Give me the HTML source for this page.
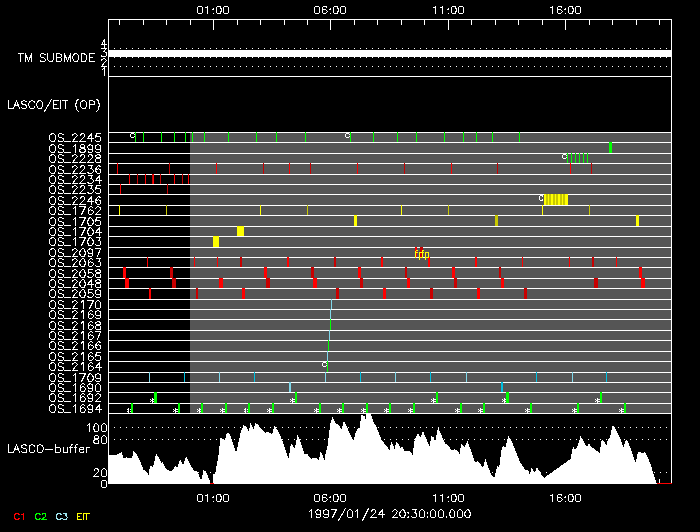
<!DOCTYPE html>
<html><head><meta charset="utf-8"><title>LASCO/EIT</title>
<style>
html,body{margin:0;padding:0;background:#000;width:700px;height:532px;overflow:hidden}
svg{display:block}
text{font-family:"Liberation Sans", sans-serif}
</style></head><body>
<svg width="700" height="532" viewBox="0 0 700 532">
<rect x="0" y="0" width="700" height="532" fill="#000"/>
<g shape-rendering="crispEdges">
<rect x="108" y="19" width="1" height="465" fill="#fff"/>
<rect x="671" y="19" width="1" height="465" fill="#fff"/>
<rect x="108" y="19" width="564" height="1" fill="#fff"/>
<rect x="119" y="19" width="1" height="6" fill="#fff"/>
<rect x="143" y="19" width="1" height="6" fill="#fff"/>
<rect x="166" y="19" width="1" height="6" fill="#fff"/>
<rect x="190" y="19" width="1" height="6" fill="#fff"/>
<rect x="213" y="19" width="1" height="11" fill="#fff"/>
<rect x="237" y="19" width="1" height="6" fill="#fff"/>
<rect x="260" y="19" width="1" height="6" fill="#fff"/>
<rect x="284" y="19" width="1" height="6" fill="#fff"/>
<rect x="307" y="19" width="1" height="6" fill="#fff"/>
<rect x="330" y="19" width="1" height="11" fill="#fff"/>
<rect x="354" y="19" width="1" height="6" fill="#fff"/>
<rect x="377" y="19" width="1" height="6" fill="#fff"/>
<rect x="401" y="19" width="1" height="6" fill="#fff"/>
<rect x="424" y="19" width="1" height="6" fill="#fff"/>
<rect x="448" y="19" width="1" height="11" fill="#fff"/>
<rect x="471" y="19" width="1" height="6" fill="#fff"/>
<rect x="495" y="19" width="1" height="6" fill="#fff"/>
<rect x="518" y="19" width="1" height="6" fill="#fff"/>
<rect x="542" y="19" width="1" height="6" fill="#fff"/>
<rect x="565" y="19" width="1" height="11" fill="#fff"/>
<rect x="589" y="19" width="1" height="6" fill="#fff"/>
<rect x="612" y="19" width="1" height="6" fill="#fff"/>
<rect x="636" y="19" width="1" height="6" fill="#fff"/>
<rect x="659" y="19" width="1" height="6" fill="#fff"/>
<rect x="114" y="48" width="1" height="1" fill="#fff"/>
<rect x="120" y="48" width="1" height="1" fill="#fff"/>
<rect x="126" y="48" width="1" height="1" fill="#fff"/>
<rect x="132" y="48" width="1" height="1" fill="#fff"/>
<rect x="138" y="48" width="1" height="1" fill="#fff"/>
<rect x="144" y="48" width="1" height="1" fill="#fff"/>
<rect x="150" y="48" width="1" height="1" fill="#fff"/>
<rect x="156" y="48" width="1" height="1" fill="#fff"/>
<rect x="162" y="48" width="1" height="1" fill="#fff"/>
<rect x="168" y="48" width="1" height="1" fill="#fff"/>
<rect x="174" y="48" width="1" height="1" fill="#fff"/>
<rect x="180" y="48" width="1" height="1" fill="#fff"/>
<rect x="186" y="48" width="1" height="1" fill="#fff"/>
<rect x="192" y="48" width="1" height="1" fill="#fff"/>
<rect x="198" y="48" width="1" height="1" fill="#fff"/>
<rect x="204" y="48" width="1" height="1" fill="#fff"/>
<rect x="210" y="48" width="1" height="1" fill="#fff"/>
<rect x="216" y="48" width="1" height="1" fill="#fff"/>
<rect x="222" y="48" width="1" height="1" fill="#fff"/>
<rect x="228" y="48" width="1" height="1" fill="#fff"/>
<rect x="234" y="48" width="1" height="1" fill="#fff"/>
<rect x="240" y="48" width="1" height="1" fill="#fff"/>
<rect x="246" y="48" width="1" height="1" fill="#fff"/>
<rect x="252" y="48" width="1" height="1" fill="#fff"/>
<rect x="258" y="48" width="1" height="1" fill="#fff"/>
<rect x="264" y="48" width="1" height="1" fill="#fff"/>
<rect x="270" y="48" width="1" height="1" fill="#fff"/>
<rect x="276" y="48" width="1" height="1" fill="#fff"/>
<rect x="282" y="48" width="1" height="1" fill="#fff"/>
<rect x="288" y="48" width="1" height="1" fill="#fff"/>
<rect x="294" y="48" width="1" height="1" fill="#fff"/>
<rect x="300" y="48" width="1" height="1" fill="#fff"/>
<rect x="306" y="48" width="1" height="1" fill="#fff"/>
<rect x="312" y="48" width="1" height="1" fill="#fff"/>
<rect x="318" y="48" width="1" height="1" fill="#fff"/>
<rect x="324" y="48" width="1" height="1" fill="#fff"/>
<rect x="330" y="48" width="1" height="1" fill="#fff"/>
<rect x="336" y="48" width="1" height="1" fill="#fff"/>
<rect x="342" y="48" width="1" height="1" fill="#fff"/>
<rect x="348" y="48" width="1" height="1" fill="#fff"/>
<rect x="354" y="48" width="1" height="1" fill="#fff"/>
<rect x="360" y="48" width="1" height="1" fill="#fff"/>
<rect x="366" y="48" width="1" height="1" fill="#fff"/>
<rect x="372" y="48" width="1" height="1" fill="#fff"/>
<rect x="378" y="48" width="1" height="1" fill="#fff"/>
<rect x="384" y="48" width="1" height="1" fill="#fff"/>
<rect x="390" y="48" width="1" height="1" fill="#fff"/>
<rect x="396" y="48" width="1" height="1" fill="#fff"/>
<rect x="402" y="48" width="1" height="1" fill="#fff"/>
<rect x="408" y="48" width="1" height="1" fill="#fff"/>
<rect x="414" y="48" width="1" height="1" fill="#fff"/>
<rect x="420" y="48" width="1" height="1" fill="#fff"/>
<rect x="426" y="48" width="1" height="1" fill="#fff"/>
<rect x="432" y="48" width="1" height="1" fill="#fff"/>
<rect x="438" y="48" width="1" height="1" fill="#fff"/>
<rect x="444" y="48" width="1" height="1" fill="#fff"/>
<rect x="450" y="48" width="1" height="1" fill="#fff"/>
<rect x="456" y="48" width="1" height="1" fill="#fff"/>
<rect x="462" y="48" width="1" height="1" fill="#fff"/>
<rect x="468" y="48" width="1" height="1" fill="#fff"/>
<rect x="474" y="48" width="1" height="1" fill="#fff"/>
<rect x="480" y="48" width="1" height="1" fill="#fff"/>
<rect x="486" y="48" width="1" height="1" fill="#fff"/>
<rect x="492" y="48" width="1" height="1" fill="#fff"/>
<rect x="498" y="48" width="1" height="1" fill="#fff"/>
<rect x="504" y="48" width="1" height="1" fill="#fff"/>
<rect x="510" y="48" width="1" height="1" fill="#fff"/>
<rect x="516" y="48" width="1" height="1" fill="#fff"/>
<rect x="522" y="48" width="1" height="1" fill="#fff"/>
<rect x="528" y="48" width="1" height="1" fill="#fff"/>
<rect x="534" y="48" width="1" height="1" fill="#fff"/>
<rect x="540" y="48" width="1" height="1" fill="#fff"/>
<rect x="546" y="48" width="1" height="1" fill="#fff"/>
<rect x="552" y="48" width="1" height="1" fill="#fff"/>
<rect x="558" y="48" width="1" height="1" fill="#fff"/>
<rect x="564" y="48" width="1" height="1" fill="#fff"/>
<rect x="570" y="48" width="1" height="1" fill="#fff"/>
<rect x="576" y="48" width="1" height="1" fill="#fff"/>
<rect x="582" y="48" width="1" height="1" fill="#fff"/>
<rect x="588" y="48" width="1" height="1" fill="#fff"/>
<rect x="594" y="48" width="1" height="1" fill="#fff"/>
<rect x="600" y="48" width="1" height="1" fill="#fff"/>
<rect x="606" y="48" width="1" height="1" fill="#fff"/>
<rect x="612" y="48" width="1" height="1" fill="#fff"/>
<rect x="618" y="48" width="1" height="1" fill="#fff"/>
<rect x="624" y="48" width="1" height="1" fill="#fff"/>
<rect x="630" y="48" width="1" height="1" fill="#fff"/>
<rect x="636" y="48" width="1" height="1" fill="#fff"/>
<rect x="642" y="48" width="1" height="1" fill="#fff"/>
<rect x="648" y="48" width="1" height="1" fill="#fff"/>
<rect x="654" y="48" width="1" height="1" fill="#fff"/>
<rect x="660" y="48" width="1" height="1" fill="#fff"/>
<rect x="666" y="48" width="1" height="1" fill="#fff"/>
<rect x="114" y="57" width="1" height="1" fill="#fff"/>
<rect x="120" y="57" width="1" height="1" fill="#fff"/>
<rect x="126" y="57" width="1" height="1" fill="#fff"/>
<rect x="132" y="57" width="1" height="1" fill="#fff"/>
<rect x="138" y="57" width="1" height="1" fill="#fff"/>
<rect x="144" y="57" width="1" height="1" fill="#fff"/>
<rect x="150" y="57" width="1" height="1" fill="#fff"/>
<rect x="156" y="57" width="1" height="1" fill="#fff"/>
<rect x="162" y="57" width="1" height="1" fill="#fff"/>
<rect x="168" y="57" width="1" height="1" fill="#fff"/>
<rect x="174" y="57" width="1" height="1" fill="#fff"/>
<rect x="180" y="57" width="1" height="1" fill="#fff"/>
<rect x="186" y="57" width="1" height="1" fill="#fff"/>
<rect x="192" y="57" width="1" height="1" fill="#fff"/>
<rect x="198" y="57" width="1" height="1" fill="#fff"/>
<rect x="204" y="57" width="1" height="1" fill="#fff"/>
<rect x="210" y="57" width="1" height="1" fill="#fff"/>
<rect x="216" y="57" width="1" height="1" fill="#fff"/>
<rect x="222" y="57" width="1" height="1" fill="#fff"/>
<rect x="228" y="57" width="1" height="1" fill="#fff"/>
<rect x="234" y="57" width="1" height="1" fill="#fff"/>
<rect x="240" y="57" width="1" height="1" fill="#fff"/>
<rect x="246" y="57" width="1" height="1" fill="#fff"/>
<rect x="252" y="57" width="1" height="1" fill="#fff"/>
<rect x="258" y="57" width="1" height="1" fill="#fff"/>
<rect x="264" y="57" width="1" height="1" fill="#fff"/>
<rect x="270" y="57" width="1" height="1" fill="#fff"/>
<rect x="276" y="57" width="1" height="1" fill="#fff"/>
<rect x="282" y="57" width="1" height="1" fill="#fff"/>
<rect x="288" y="57" width="1" height="1" fill="#fff"/>
<rect x="294" y="57" width="1" height="1" fill="#fff"/>
<rect x="300" y="57" width="1" height="1" fill="#fff"/>
<rect x="306" y="57" width="1" height="1" fill="#fff"/>
<rect x="312" y="57" width="1" height="1" fill="#fff"/>
<rect x="318" y="57" width="1" height="1" fill="#fff"/>
<rect x="324" y="57" width="1" height="1" fill="#fff"/>
<rect x="330" y="57" width="1" height="1" fill="#fff"/>
<rect x="336" y="57" width="1" height="1" fill="#fff"/>
<rect x="342" y="57" width="1" height="1" fill="#fff"/>
<rect x="348" y="57" width="1" height="1" fill="#fff"/>
<rect x="354" y="57" width="1" height="1" fill="#fff"/>
<rect x="360" y="57" width="1" height="1" fill="#fff"/>
<rect x="366" y="57" width="1" height="1" fill="#fff"/>
<rect x="372" y="57" width="1" height="1" fill="#fff"/>
<rect x="378" y="57" width="1" height="1" fill="#fff"/>
<rect x="384" y="57" width="1" height="1" fill="#fff"/>
<rect x="390" y="57" width="1" height="1" fill="#fff"/>
<rect x="396" y="57" width="1" height="1" fill="#fff"/>
<rect x="402" y="57" width="1" height="1" fill="#fff"/>
<rect x="408" y="57" width="1" height="1" fill="#fff"/>
<rect x="414" y="57" width="1" height="1" fill="#fff"/>
<rect x="420" y="57" width="1" height="1" fill="#fff"/>
<rect x="426" y="57" width="1" height="1" fill="#fff"/>
<rect x="432" y="57" width="1" height="1" fill="#fff"/>
<rect x="438" y="57" width="1" height="1" fill="#fff"/>
<rect x="444" y="57" width="1" height="1" fill="#fff"/>
<rect x="450" y="57" width="1" height="1" fill="#fff"/>
<rect x="456" y="57" width="1" height="1" fill="#fff"/>
<rect x="462" y="57" width="1" height="1" fill="#fff"/>
<rect x="468" y="57" width="1" height="1" fill="#fff"/>
<rect x="474" y="57" width="1" height="1" fill="#fff"/>
<rect x="480" y="57" width="1" height="1" fill="#fff"/>
<rect x="486" y="57" width="1" height="1" fill="#fff"/>
<rect x="492" y="57" width="1" height="1" fill="#fff"/>
<rect x="498" y="57" width="1" height="1" fill="#fff"/>
<rect x="504" y="57" width="1" height="1" fill="#fff"/>
<rect x="510" y="57" width="1" height="1" fill="#fff"/>
<rect x="516" y="57" width="1" height="1" fill="#fff"/>
<rect x="522" y="57" width="1" height="1" fill="#fff"/>
<rect x="528" y="57" width="1" height="1" fill="#fff"/>
<rect x="534" y="57" width="1" height="1" fill="#fff"/>
<rect x="540" y="57" width="1" height="1" fill="#fff"/>
<rect x="546" y="57" width="1" height="1" fill="#fff"/>
<rect x="552" y="57" width="1" height="1" fill="#fff"/>
<rect x="558" y="57" width="1" height="1" fill="#fff"/>
<rect x="564" y="57" width="1" height="1" fill="#fff"/>
<rect x="570" y="57" width="1" height="1" fill="#fff"/>
<rect x="576" y="57" width="1" height="1" fill="#fff"/>
<rect x="582" y="57" width="1" height="1" fill="#fff"/>
<rect x="588" y="57" width="1" height="1" fill="#fff"/>
<rect x="594" y="57" width="1" height="1" fill="#fff"/>
<rect x="600" y="57" width="1" height="1" fill="#fff"/>
<rect x="606" y="57" width="1" height="1" fill="#fff"/>
<rect x="612" y="57" width="1" height="1" fill="#fff"/>
<rect x="618" y="57" width="1" height="1" fill="#fff"/>
<rect x="624" y="57" width="1" height="1" fill="#fff"/>
<rect x="630" y="57" width="1" height="1" fill="#fff"/>
<rect x="636" y="57" width="1" height="1" fill="#fff"/>
<rect x="642" y="57" width="1" height="1" fill="#fff"/>
<rect x="648" y="57" width="1" height="1" fill="#fff"/>
<rect x="654" y="57" width="1" height="1" fill="#fff"/>
<rect x="660" y="57" width="1" height="1" fill="#fff"/>
<rect x="666" y="57" width="1" height="1" fill="#fff"/>
<rect x="114" y="66" width="1" height="1" fill="#fff"/>
<rect x="120" y="66" width="1" height="1" fill="#fff"/>
<rect x="126" y="66" width="1" height="1" fill="#fff"/>
<rect x="132" y="66" width="1" height="1" fill="#fff"/>
<rect x="138" y="66" width="1" height="1" fill="#fff"/>
<rect x="144" y="66" width="1" height="1" fill="#fff"/>
<rect x="150" y="66" width="1" height="1" fill="#fff"/>
<rect x="156" y="66" width="1" height="1" fill="#fff"/>
<rect x="162" y="66" width="1" height="1" fill="#fff"/>
<rect x="168" y="66" width="1" height="1" fill="#fff"/>
<rect x="174" y="66" width="1" height="1" fill="#fff"/>
<rect x="180" y="66" width="1" height="1" fill="#fff"/>
<rect x="186" y="66" width="1" height="1" fill="#fff"/>
<rect x="192" y="66" width="1" height="1" fill="#fff"/>
<rect x="198" y="66" width="1" height="1" fill="#fff"/>
<rect x="204" y="66" width="1" height="1" fill="#fff"/>
<rect x="210" y="66" width="1" height="1" fill="#fff"/>
<rect x="216" y="66" width="1" height="1" fill="#fff"/>
<rect x="222" y="66" width="1" height="1" fill="#fff"/>
<rect x="228" y="66" width="1" height="1" fill="#fff"/>
<rect x="234" y="66" width="1" height="1" fill="#fff"/>
<rect x="240" y="66" width="1" height="1" fill="#fff"/>
<rect x="246" y="66" width="1" height="1" fill="#fff"/>
<rect x="252" y="66" width="1" height="1" fill="#fff"/>
<rect x="258" y="66" width="1" height="1" fill="#fff"/>
<rect x="264" y="66" width="1" height="1" fill="#fff"/>
<rect x="270" y="66" width="1" height="1" fill="#fff"/>
<rect x="276" y="66" width="1" height="1" fill="#fff"/>
<rect x="282" y="66" width="1" height="1" fill="#fff"/>
<rect x="288" y="66" width="1" height="1" fill="#fff"/>
<rect x="294" y="66" width="1" height="1" fill="#fff"/>
<rect x="300" y="66" width="1" height="1" fill="#fff"/>
<rect x="306" y="66" width="1" height="1" fill="#fff"/>
<rect x="312" y="66" width="1" height="1" fill="#fff"/>
<rect x="318" y="66" width="1" height="1" fill="#fff"/>
<rect x="324" y="66" width="1" height="1" fill="#fff"/>
<rect x="330" y="66" width="1" height="1" fill="#fff"/>
<rect x="336" y="66" width="1" height="1" fill="#fff"/>
<rect x="342" y="66" width="1" height="1" fill="#fff"/>
<rect x="348" y="66" width="1" height="1" fill="#fff"/>
<rect x="354" y="66" width="1" height="1" fill="#fff"/>
<rect x="360" y="66" width="1" height="1" fill="#fff"/>
<rect x="366" y="66" width="1" height="1" fill="#fff"/>
<rect x="372" y="66" width="1" height="1" fill="#fff"/>
<rect x="378" y="66" width="1" height="1" fill="#fff"/>
<rect x="384" y="66" width="1" height="1" fill="#fff"/>
<rect x="390" y="66" width="1" height="1" fill="#fff"/>
<rect x="396" y="66" width="1" height="1" fill="#fff"/>
<rect x="402" y="66" width="1" height="1" fill="#fff"/>
<rect x="408" y="66" width="1" height="1" fill="#fff"/>
<rect x="414" y="66" width="1" height="1" fill="#fff"/>
<rect x="420" y="66" width="1" height="1" fill="#fff"/>
<rect x="426" y="66" width="1" height="1" fill="#fff"/>
<rect x="432" y="66" width="1" height="1" fill="#fff"/>
<rect x="438" y="66" width="1" height="1" fill="#fff"/>
<rect x="444" y="66" width="1" height="1" fill="#fff"/>
<rect x="450" y="66" width="1" height="1" fill="#fff"/>
<rect x="456" y="66" width="1" height="1" fill="#fff"/>
<rect x="462" y="66" width="1" height="1" fill="#fff"/>
<rect x="468" y="66" width="1" height="1" fill="#fff"/>
<rect x="474" y="66" width="1" height="1" fill="#fff"/>
<rect x="480" y="66" width="1" height="1" fill="#fff"/>
<rect x="486" y="66" width="1" height="1" fill="#fff"/>
<rect x="492" y="66" width="1" height="1" fill="#fff"/>
<rect x="498" y="66" width="1" height="1" fill="#fff"/>
<rect x="504" y="66" width="1" height="1" fill="#fff"/>
<rect x="510" y="66" width="1" height="1" fill="#fff"/>
<rect x="516" y="66" width="1" height="1" fill="#fff"/>
<rect x="522" y="66" width="1" height="1" fill="#fff"/>
<rect x="528" y="66" width="1" height="1" fill="#fff"/>
<rect x="534" y="66" width="1" height="1" fill="#fff"/>
<rect x="540" y="66" width="1" height="1" fill="#fff"/>
<rect x="546" y="66" width="1" height="1" fill="#fff"/>
<rect x="552" y="66" width="1" height="1" fill="#fff"/>
<rect x="558" y="66" width="1" height="1" fill="#fff"/>
<rect x="564" y="66" width="1" height="1" fill="#fff"/>
<rect x="570" y="66" width="1" height="1" fill="#fff"/>
<rect x="576" y="66" width="1" height="1" fill="#fff"/>
<rect x="582" y="66" width="1" height="1" fill="#fff"/>
<rect x="588" y="66" width="1" height="1" fill="#fff"/>
<rect x="594" y="66" width="1" height="1" fill="#fff"/>
<rect x="600" y="66" width="1" height="1" fill="#fff"/>
<rect x="606" y="66" width="1" height="1" fill="#fff"/>
<rect x="612" y="66" width="1" height="1" fill="#fff"/>
<rect x="618" y="66" width="1" height="1" fill="#fff"/>
<rect x="624" y="66" width="1" height="1" fill="#fff"/>
<rect x="630" y="66" width="1" height="1" fill="#fff"/>
<rect x="636" y="66" width="1" height="1" fill="#fff"/>
<rect x="642" y="66" width="1" height="1" fill="#fff"/>
<rect x="648" y="66" width="1" height="1" fill="#fff"/>
<rect x="654" y="66" width="1" height="1" fill="#fff"/>
<rect x="660" y="66" width="1" height="1" fill="#fff"/>
<rect x="666" y="66" width="1" height="1" fill="#fff"/>
<rect x="109" y="50" width="562" height="7" fill="#fff"/>
<rect x="108" y="76" width="564" height="1" fill="#fff"/>
<rect x="190" y="133" width="481" height="280" fill="#555555"/>
<rect x="108" y="132" width="564" height="1" fill="#fff"/>
<rect x="108" y="142" width="564" height="1" fill="#fff"/>
<rect x="108" y="153" width="564" height="1" fill="#fff"/>
<rect x="108" y="163" width="564" height="1" fill="#fff"/>
<rect x="108" y="174" width="564" height="1" fill="#fff"/>
<rect x="108" y="184" width="564" height="1" fill="#fff"/>
<rect x="108" y="194" width="564" height="1" fill="#fff"/>
<rect x="108" y="205" width="564" height="1" fill="#fff"/>
<rect x="108" y="215" width="564" height="1" fill="#fff"/>
<rect x="108" y="226" width="564" height="1" fill="#fff"/>
<rect x="108" y="236" width="564" height="1" fill="#fff"/>
<rect x="108" y="247" width="564" height="1" fill="#fff"/>
<rect x="108" y="257" width="564" height="1" fill="#fff"/>
<rect x="108" y="267" width="564" height="1" fill="#fff"/>
<rect x="108" y="278" width="564" height="1" fill="#fff"/>
<rect x="108" y="288" width="564" height="1" fill="#fff"/>
<rect x="108" y="299" width="564" height="1" fill="#fff"/>
<rect x="108" y="309" width="564" height="1" fill="#fff"/>
<rect x="108" y="319" width="564" height="1" fill="#fff"/>
<rect x="108" y="330" width="564" height="1" fill="#fff"/>
<rect x="108" y="340" width="564" height="1" fill="#fff"/>
<rect x="108" y="351" width="564" height="1" fill="#fff"/>
<rect x="108" y="361" width="564" height="1" fill="#fff"/>
<rect x="108" y="372" width="564" height="1" fill="#fff"/>
<rect x="108" y="382" width="564" height="1" fill="#fff"/>
<rect x="108" y="392" width="564" height="1" fill="#fff"/>
<rect x="108" y="403" width="564" height="1" fill="#fff"/>
<rect x="108" y="413" width="564" height="1" fill="#fff"/>
</g>
<g shape-rendering="crispEdges">
<rect x="131" y="133" width="1" height="1" fill="#fff"/>
<rect x="132" y="133" width="1" height="1" fill="#fff"/>
<rect x="133" y="133" width="1" height="1" fill="#fff"/>
<rect x="130" y="134" width="1" height="1" fill="#fff"/>
<rect x="134" y="134" width="1" height="1" fill="#fff"/>
<rect x="130" y="135" width="1" height="1" fill="#fff"/>
<rect x="130" y="136" width="1" height="1" fill="#fff"/>
<rect x="134" y="136" width="1" height="1" fill="#fff"/>
<rect x="131" y="137" width="1" height="1" fill="#fff"/>
<rect x="132" y="137" width="1" height="1" fill="#fff"/>
<rect x="133" y="137" width="1" height="1" fill="#fff"/>
<rect x="346" y="133" width="1" height="1" fill="#fff"/>
<rect x="347" y="133" width="1" height="1" fill="#fff"/>
<rect x="348" y="133" width="1" height="1" fill="#fff"/>
<rect x="345" y="134" width="1" height="1" fill="#fff"/>
<rect x="349" y="134" width="1" height="1" fill="#fff"/>
<rect x="345" y="135" width="1" height="1" fill="#fff"/>
<rect x="345" y="136" width="1" height="1" fill="#fff"/>
<rect x="349" y="136" width="1" height="1" fill="#fff"/>
<rect x="346" y="137" width="1" height="1" fill="#fff"/>
<rect x="347" y="137" width="1" height="1" fill="#fff"/>
<rect x="348" y="137" width="1" height="1" fill="#fff"/>
<rect x="563" y="154" width="1" height="1" fill="#fff"/>
<rect x="564" y="154" width="1" height="1" fill="#fff"/>
<rect x="565" y="154" width="1" height="1" fill="#fff"/>
<rect x="562" y="155" width="1" height="1" fill="#fff"/>
<rect x="566" y="155" width="1" height="1" fill="#fff"/>
<rect x="562" y="156" width="1" height="1" fill="#fff"/>
<rect x="562" y="157" width="1" height="1" fill="#fff"/>
<rect x="566" y="157" width="1" height="1" fill="#fff"/>
<rect x="563" y="158" width="1" height="1" fill="#fff"/>
<rect x="564" y="158" width="1" height="1" fill="#fff"/>
<rect x="565" y="158" width="1" height="1" fill="#fff"/>
<rect x="540" y="195" width="1" height="1" fill="#fff"/>
<rect x="541" y="195" width="1" height="1" fill="#fff"/>
<rect x="542" y="195" width="1" height="1" fill="#fff"/>
<rect x="539" y="196" width="1" height="1" fill="#fff"/>
<rect x="542" y="196" width="1" height="1" fill="#fff"/>
<rect x="539" y="197" width="1" height="1" fill="#fff"/>
<rect x="539" y="198" width="1" height="1" fill="#fff"/>
<rect x="539" y="199" width="1" height="1" fill="#fff"/>
<rect x="542" y="199" width="1" height="1" fill="#fff"/>
<rect x="540" y="200" width="1" height="1" fill="#fff"/>
<rect x="541" y="200" width="1" height="1" fill="#fff"/>
<rect x="542" y="200" width="1" height="1" fill="#fff"/>
<rect x="323" y="362" width="1" height="1" fill="#fff"/>
<rect x="324" y="362" width="1" height="1" fill="#fff"/>
<rect x="325" y="362" width="1" height="1" fill="#fff"/>
<rect x="322" y="363" width="1" height="1" fill="#fff"/>
<rect x="326" y="363" width="1" height="1" fill="#fff"/>
<rect x="322" y="364" width="1" height="1" fill="#fff"/>
<rect x="322" y="365" width="1" height="1" fill="#fff"/>
<rect x="326" y="365" width="1" height="1" fill="#fff"/>
<rect x="323" y="366" width="1" height="1" fill="#fff"/>
<rect x="324" y="366" width="1" height="1" fill="#fff"/>
<rect x="325" y="366" width="1" height="1" fill="#fff"/>
<rect x="152" y="398" width="1" height="1" fill="#fff"/>
<rect x="150" y="399" width="1" height="1" fill="#fff"/>
<rect x="152" y="399" width="1" height="1" fill="#fff"/>
<rect x="153" y="399" width="1" height="1" fill="#fff"/>
<rect x="154" y="399" width="1" height="1" fill="#fff"/>
<rect x="151" y="400" width="1" height="1" fill="#fff"/>
<rect x="152" y="400" width="1" height="1" fill="#fff"/>
<rect x="150" y="401" width="1" height="1" fill="#fff"/>
<rect x="152" y="401" width="1" height="1" fill="#fff"/>
<rect x="153" y="401" width="1" height="1" fill="#fff"/>
<rect x="154" y="401" width="1" height="1" fill="#fff"/>
<rect x="152" y="402" width="1" height="1" fill="#fff"/>
<rect x="292" y="398" width="1" height="1" fill="#fff"/>
<rect x="290" y="399" width="1" height="1" fill="#fff"/>
<rect x="292" y="399" width="1" height="1" fill="#fff"/>
<rect x="293" y="399" width="1" height="1" fill="#fff"/>
<rect x="294" y="399" width="1" height="1" fill="#fff"/>
<rect x="291" y="400" width="1" height="1" fill="#fff"/>
<rect x="292" y="400" width="1" height="1" fill="#fff"/>
<rect x="290" y="401" width="1" height="1" fill="#fff"/>
<rect x="292" y="401" width="1" height="1" fill="#fff"/>
<rect x="293" y="401" width="1" height="1" fill="#fff"/>
<rect x="294" y="401" width="1" height="1" fill="#fff"/>
<rect x="292" y="402" width="1" height="1" fill="#fff"/>
<rect x="433" y="398" width="1" height="1" fill="#fff"/>
<rect x="431" y="399" width="1" height="1" fill="#fff"/>
<rect x="433" y="399" width="1" height="1" fill="#fff"/>
<rect x="434" y="399" width="1" height="1" fill="#fff"/>
<rect x="435" y="399" width="1" height="1" fill="#fff"/>
<rect x="432" y="400" width="1" height="1" fill="#fff"/>
<rect x="433" y="400" width="1" height="1" fill="#fff"/>
<rect x="431" y="401" width="1" height="1" fill="#fff"/>
<rect x="433" y="401" width="1" height="1" fill="#fff"/>
<rect x="434" y="401" width="1" height="1" fill="#fff"/>
<rect x="435" y="401" width="1" height="1" fill="#fff"/>
<rect x="433" y="402" width="1" height="1" fill="#fff"/>
<rect x="504" y="398" width="1" height="1" fill="#fff"/>
<rect x="502" y="399" width="1" height="1" fill="#fff"/>
<rect x="504" y="399" width="1" height="1" fill="#fff"/>
<rect x="505" y="399" width="1" height="1" fill="#fff"/>
<rect x="506" y="399" width="1" height="1" fill="#fff"/>
<rect x="503" y="400" width="1" height="1" fill="#fff"/>
<rect x="504" y="400" width="1" height="1" fill="#fff"/>
<rect x="502" y="401" width="1" height="1" fill="#fff"/>
<rect x="504" y="401" width="1" height="1" fill="#fff"/>
<rect x="505" y="401" width="1" height="1" fill="#fff"/>
<rect x="506" y="401" width="1" height="1" fill="#fff"/>
<rect x="504" y="402" width="1" height="1" fill="#fff"/>
<rect x="597" y="398" width="1" height="1" fill="#fff"/>
<rect x="595" y="399" width="1" height="1" fill="#fff"/>
<rect x="597" y="399" width="1" height="1" fill="#fff"/>
<rect x="598" y="399" width="1" height="1" fill="#fff"/>
<rect x="599" y="399" width="1" height="1" fill="#fff"/>
<rect x="596" y="400" width="1" height="1" fill="#fff"/>
<rect x="597" y="400" width="1" height="1" fill="#fff"/>
<rect x="595" y="401" width="1" height="1" fill="#fff"/>
<rect x="597" y="401" width="1" height="1" fill="#fff"/>
<rect x="598" y="401" width="1" height="1" fill="#fff"/>
<rect x="599" y="401" width="1" height="1" fill="#fff"/>
<rect x="597" y="402" width="1" height="1" fill="#fff"/>
<rect x="128" y="408" width="1" height="1" fill="#fff"/>
<rect x="127" y="409" width="1" height="1" fill="#fff"/>
<rect x="128" y="409" width="1" height="1" fill="#fff"/>
<rect x="130" y="409" width="1" height="1" fill="#fff"/>
<rect x="128" y="410" width="1" height="1" fill="#fff"/>
<rect x="127" y="411" width="1" height="1" fill="#fff"/>
<rect x="128" y="411" width="1" height="1" fill="#fff"/>
<rect x="130" y="411" width="1" height="1" fill="#fff"/>
<rect x="128" y="412" width="1" height="1" fill="#fff"/>
<rect x="175" y="408" width="1" height="1" fill="#fff"/>
<rect x="173" y="409" width="1" height="1" fill="#fff"/>
<rect x="175" y="409" width="1" height="1" fill="#fff"/>
<rect x="176" y="409" width="1" height="1" fill="#fff"/>
<rect x="177" y="409" width="1" height="1" fill="#fff"/>
<rect x="174" y="410" width="1" height="1" fill="#fff"/>
<rect x="175" y="410" width="1" height="1" fill="#fff"/>
<rect x="173" y="411" width="1" height="1" fill="#fff"/>
<rect x="175" y="411" width="1" height="1" fill="#fff"/>
<rect x="176" y="411" width="1" height="1" fill="#fff"/>
<rect x="177" y="411" width="1" height="1" fill="#fff"/>
<rect x="175" y="412" width="1" height="1" fill="#fff"/>
<rect x="199" y="408" width="1" height="1" fill="#fff"/>
<rect x="197" y="409" width="1" height="1" fill="#fff"/>
<rect x="199" y="409" width="1" height="1" fill="#fff"/>
<rect x="200" y="409" width="1" height="1" fill="#fff"/>
<rect x="201" y="409" width="1" height="1" fill="#fff"/>
<rect x="198" y="410" width="1" height="1" fill="#fff"/>
<rect x="199" y="410" width="1" height="1" fill="#fff"/>
<rect x="197" y="411" width="1" height="1" fill="#fff"/>
<rect x="199" y="411" width="1" height="1" fill="#fff"/>
<rect x="200" y="411" width="1" height="1" fill="#fff"/>
<rect x="201" y="411" width="1" height="1" fill="#fff"/>
<rect x="199" y="412" width="1" height="1" fill="#fff"/>
<rect x="222" y="408" width="1" height="1" fill="#fff"/>
<rect x="220" y="409" width="1" height="1" fill="#fff"/>
<rect x="222" y="409" width="1" height="1" fill="#fff"/>
<rect x="223" y="409" width="1" height="1" fill="#fff"/>
<rect x="224" y="409" width="1" height="1" fill="#fff"/>
<rect x="221" y="410" width="1" height="1" fill="#fff"/>
<rect x="222" y="410" width="1" height="1" fill="#fff"/>
<rect x="220" y="411" width="1" height="1" fill="#fff"/>
<rect x="222" y="411" width="1" height="1" fill="#fff"/>
<rect x="223" y="411" width="1" height="1" fill="#fff"/>
<rect x="224" y="411" width="1" height="1" fill="#fff"/>
<rect x="222" y="412" width="1" height="1" fill="#fff"/>
<rect x="245" y="408" width="1" height="1" fill="#fff"/>
<rect x="244" y="409" width="1" height="1" fill="#fff"/>
<rect x="245" y="409" width="1" height="1" fill="#fff"/>
<rect x="247" y="409" width="1" height="1" fill="#fff"/>
<rect x="245" y="410" width="1" height="1" fill="#fff"/>
<rect x="244" y="411" width="1" height="1" fill="#fff"/>
<rect x="245" y="411" width="1" height="1" fill="#fff"/>
<rect x="247" y="411" width="1" height="1" fill="#fff"/>
<rect x="245" y="412" width="1" height="1" fill="#fff"/>
<rect x="269" y="408" width="1" height="1" fill="#fff"/>
<rect x="267" y="409" width="1" height="1" fill="#fff"/>
<rect x="269" y="409" width="1" height="1" fill="#fff"/>
<rect x="270" y="409" width="1" height="1" fill="#fff"/>
<rect x="271" y="409" width="1" height="1" fill="#fff"/>
<rect x="268" y="410" width="1" height="1" fill="#fff"/>
<rect x="269" y="410" width="1" height="1" fill="#fff"/>
<rect x="267" y="411" width="1" height="1" fill="#fff"/>
<rect x="269" y="411" width="1" height="1" fill="#fff"/>
<rect x="270" y="411" width="1" height="1" fill="#fff"/>
<rect x="271" y="411" width="1" height="1" fill="#fff"/>
<rect x="269" y="412" width="1" height="1" fill="#fff"/>
<rect x="316" y="408" width="1" height="1" fill="#fff"/>
<rect x="314" y="409" width="1" height="1" fill="#fff"/>
<rect x="316" y="409" width="1" height="1" fill="#fff"/>
<rect x="317" y="409" width="1" height="1" fill="#fff"/>
<rect x="318" y="409" width="1" height="1" fill="#fff"/>
<rect x="315" y="410" width="1" height="1" fill="#fff"/>
<rect x="316" y="410" width="1" height="1" fill="#fff"/>
<rect x="314" y="411" width="1" height="1" fill="#fff"/>
<rect x="316" y="411" width="1" height="1" fill="#fff"/>
<rect x="317" y="411" width="1" height="1" fill="#fff"/>
<rect x="318" y="411" width="1" height="1" fill="#fff"/>
<rect x="316" y="412" width="1" height="1" fill="#fff"/>
<rect x="339" y="408" width="1" height="1" fill="#fff"/>
<rect x="337" y="409" width="1" height="1" fill="#fff"/>
<rect x="339" y="409" width="1" height="1" fill="#fff"/>
<rect x="340" y="409" width="1" height="1" fill="#fff"/>
<rect x="341" y="409" width="1" height="1" fill="#fff"/>
<rect x="338" y="410" width="1" height="1" fill="#fff"/>
<rect x="339" y="410" width="1" height="1" fill="#fff"/>
<rect x="337" y="411" width="1" height="1" fill="#fff"/>
<rect x="339" y="411" width="1" height="1" fill="#fff"/>
<rect x="340" y="411" width="1" height="1" fill="#fff"/>
<rect x="341" y="411" width="1" height="1" fill="#fff"/>
<rect x="339" y="412" width="1" height="1" fill="#fff"/>
<rect x="363" y="408" width="1" height="1" fill="#fff"/>
<rect x="361" y="409" width="1" height="1" fill="#fff"/>
<rect x="363" y="409" width="1" height="1" fill="#fff"/>
<rect x="364" y="409" width="1" height="1" fill="#fff"/>
<rect x="365" y="409" width="1" height="1" fill="#fff"/>
<rect x="362" y="410" width="1" height="1" fill="#fff"/>
<rect x="363" y="410" width="1" height="1" fill="#fff"/>
<rect x="361" y="411" width="1" height="1" fill="#fff"/>
<rect x="363" y="411" width="1" height="1" fill="#fff"/>
<rect x="364" y="411" width="1" height="1" fill="#fff"/>
<rect x="365" y="411" width="1" height="1" fill="#fff"/>
<rect x="363" y="412" width="1" height="1" fill="#fff"/>
<rect x="386" y="408" width="1" height="1" fill="#fff"/>
<rect x="384" y="409" width="1" height="1" fill="#fff"/>
<rect x="386" y="409" width="1" height="1" fill="#fff"/>
<rect x="387" y="409" width="1" height="1" fill="#fff"/>
<rect x="388" y="409" width="1" height="1" fill="#fff"/>
<rect x="385" y="410" width="1" height="1" fill="#fff"/>
<rect x="386" y="410" width="1" height="1" fill="#fff"/>
<rect x="384" y="411" width="1" height="1" fill="#fff"/>
<rect x="386" y="411" width="1" height="1" fill="#fff"/>
<rect x="387" y="411" width="1" height="1" fill="#fff"/>
<rect x="388" y="411" width="1" height="1" fill="#fff"/>
<rect x="386" y="412" width="1" height="1" fill="#fff"/>
<rect x="410" y="408" width="1" height="1" fill="#fff"/>
<rect x="408" y="409" width="1" height="1" fill="#fff"/>
<rect x="410" y="409" width="1" height="1" fill="#fff"/>
<rect x="411" y="409" width="1" height="1" fill="#fff"/>
<rect x="412" y="409" width="1" height="1" fill="#fff"/>
<rect x="409" y="410" width="1" height="1" fill="#fff"/>
<rect x="410" y="410" width="1" height="1" fill="#fff"/>
<rect x="408" y="411" width="1" height="1" fill="#fff"/>
<rect x="410" y="411" width="1" height="1" fill="#fff"/>
<rect x="411" y="411" width="1" height="1" fill="#fff"/>
<rect x="412" y="411" width="1" height="1" fill="#fff"/>
<rect x="410" y="412" width="1" height="1" fill="#fff"/>
<rect x="457" y="408" width="1" height="1" fill="#fff"/>
<rect x="455" y="409" width="1" height="1" fill="#fff"/>
<rect x="457" y="409" width="1" height="1" fill="#fff"/>
<rect x="458" y="409" width="1" height="1" fill="#fff"/>
<rect x="459" y="409" width="1" height="1" fill="#fff"/>
<rect x="456" y="410" width="1" height="1" fill="#fff"/>
<rect x="457" y="410" width="1" height="1" fill="#fff"/>
<rect x="455" y="411" width="1" height="1" fill="#fff"/>
<rect x="457" y="411" width="1" height="1" fill="#fff"/>
<rect x="458" y="411" width="1" height="1" fill="#fff"/>
<rect x="459" y="411" width="1" height="1" fill="#fff"/>
<rect x="457" y="412" width="1" height="1" fill="#fff"/>
<rect x="480" y="408" width="1" height="1" fill="#fff"/>
<rect x="478" y="409" width="1" height="1" fill="#fff"/>
<rect x="480" y="409" width="1" height="1" fill="#fff"/>
<rect x="481" y="409" width="1" height="1" fill="#fff"/>
<rect x="482" y="409" width="1" height="1" fill="#fff"/>
<rect x="479" y="410" width="1" height="1" fill="#fff"/>
<rect x="480" y="410" width="1" height="1" fill="#fff"/>
<rect x="478" y="411" width="1" height="1" fill="#fff"/>
<rect x="480" y="411" width="1" height="1" fill="#fff"/>
<rect x="481" y="411" width="1" height="1" fill="#fff"/>
<rect x="482" y="411" width="1" height="1" fill="#fff"/>
<rect x="480" y="412" width="1" height="1" fill="#fff"/>
<rect x="527" y="408" width="1" height="1" fill="#fff"/>
<rect x="525" y="409" width="1" height="1" fill="#fff"/>
<rect x="527" y="409" width="1" height="1" fill="#fff"/>
<rect x="528" y="409" width="1" height="1" fill="#fff"/>
<rect x="529" y="409" width="1" height="1" fill="#fff"/>
<rect x="526" y="410" width="1" height="1" fill="#fff"/>
<rect x="527" y="410" width="1" height="1" fill="#fff"/>
<rect x="525" y="411" width="1" height="1" fill="#fff"/>
<rect x="527" y="411" width="1" height="1" fill="#fff"/>
<rect x="528" y="411" width="1" height="1" fill="#fff"/>
<rect x="529" y="411" width="1" height="1" fill="#fff"/>
<rect x="527" y="412" width="1" height="1" fill="#fff"/>
<rect x="574" y="408" width="1" height="1" fill="#fff"/>
<rect x="572" y="409" width="1" height="1" fill="#fff"/>
<rect x="574" y="409" width="1" height="1" fill="#fff"/>
<rect x="575" y="409" width="1" height="1" fill="#fff"/>
<rect x="576" y="409" width="1" height="1" fill="#fff"/>
<rect x="573" y="410" width="1" height="1" fill="#fff"/>
<rect x="574" y="410" width="1" height="1" fill="#fff"/>
<rect x="572" y="411" width="1" height="1" fill="#fff"/>
<rect x="574" y="411" width="1" height="1" fill="#fff"/>
<rect x="575" y="411" width="1" height="1" fill="#fff"/>
<rect x="576" y="411" width="1" height="1" fill="#fff"/>
<rect x="574" y="412" width="1" height="1" fill="#fff"/>
<rect x="621" y="408" width="1" height="1" fill="#fff"/>
<rect x="619" y="409" width="1" height="1" fill="#fff"/>
<rect x="621" y="409" width="1" height="1" fill="#fff"/>
<rect x="622" y="409" width="1" height="1" fill="#fff"/>
<rect x="623" y="409" width="1" height="1" fill="#fff"/>
<rect x="620" y="410" width="1" height="1" fill="#fff"/>
<rect x="621" y="410" width="1" height="1" fill="#fff"/>
<rect x="619" y="411" width="1" height="1" fill="#fff"/>
<rect x="621" y="411" width="1" height="1" fill="#fff"/>
<rect x="622" y="411" width="1" height="1" fill="#fff"/>
<rect x="623" y="411" width="1" height="1" fill="#fff"/>
<rect x="621" y="412" width="1" height="1" fill="#fff"/>
</g>
<g shape-rendering="crispEdges">
<rect x="135" y="132" width="1" height="10" fill="#00ff00"/>
<rect x="143" y="132" width="1" height="10" fill="#00ff00"/>
<rect x="161" y="132" width="1" height="10" fill="#00ff00"/>
<rect x="174" y="132" width="1" height="10" fill="#00ff00"/>
<rect x="185" y="132" width="1" height="10" fill="#00ff00"/>
<rect x="192" y="132" width="1" height="10" fill="#00ff00"/>
<rect x="204" y="132" width="1" height="10" fill="#00ff00"/>
<rect x="228" y="132" width="1" height="10" fill="#00ff00"/>
<rect x="256" y="132" width="1" height="10" fill="#00ff00"/>
<rect x="276" y="132" width="1" height="10" fill="#00ff00"/>
<rect x="305" y="132" width="1" height="10" fill="#00ff00"/>
<rect x="350" y="132" width="1" height="10" fill="#00ff00"/>
<rect x="373" y="132" width="1" height="10" fill="#00ff00"/>
<rect x="397" y="132" width="1" height="10" fill="#00ff00"/>
<rect x="416" y="132" width="1" height="10" fill="#00ff00"/>
<rect x="444" y="132" width="1" height="10" fill="#00ff00"/>
<rect x="463" y="132" width="1" height="10" fill="#00ff00"/>
<rect x="476" y="132" width="1" height="10" fill="#00ff00"/>
<rect x="492" y="132" width="1" height="10" fill="#00ff00"/>
<rect x="519" y="132" width="1" height="10" fill="#00ff00"/>
<rect x="609" y="142" width="3" height="11" fill="#00ff00"/>
<rect x="567" y="153" width="1" height="10" fill="#00ff00"/>
<rect x="571" y="153" width="1" height="10" fill="#00ff00"/>
<rect x="575" y="153" width="1" height="10" fill="#00ff00"/>
<rect x="579" y="153" width="1" height="10" fill="#00ff00"/>
<rect x="583" y="153" width="1" height="10" fill="#00ff00"/>
<rect x="587" y="153" width="1" height="10" fill="#00ff00"/>
<rect x="117" y="163" width="1" height="11" fill="#ff0000"/>
<rect x="169" y="163" width="1" height="11" fill="#c80000"/>
<rect x="216" y="163" width="1" height="11" fill="#ff0000"/>
<rect x="263" y="163" width="1" height="11" fill="#c80000"/>
<rect x="289" y="163" width="1" height="11" fill="#ff0000"/>
<rect x="310" y="163" width="1" height="11" fill="#c80000"/>
<rect x="357" y="163" width="1" height="11" fill="#ff0000"/>
<rect x="404" y="163" width="1" height="11" fill="#c80000"/>
<rect x="451" y="163" width="1" height="11" fill="#ff0000"/>
<rect x="497" y="163" width="1" height="11" fill="#c80000"/>
<rect x="570" y="163" width="1" height="11" fill="#ff0000"/>
<rect x="591" y="163" width="1" height="11" fill="#c80000"/>
<rect x="129" y="174" width="1" height="10" fill="#ff0000"/>
<rect x="137" y="174" width="1" height="10" fill="#c80000"/>
<rect x="145" y="174" width="1" height="10" fill="#ff0000"/>
<rect x="152" y="174" width="1" height="10" fill="#c80000"/>
<rect x="153" y="174" width="1" height="10" fill="#ff0000"/>
<rect x="160" y="174" width="1" height="10" fill="#c80000"/>
<rect x="174" y="174" width="1" height="10" fill="#ff0000"/>
<rect x="182" y="174" width="1" height="10" fill="#c80000"/>
<rect x="188" y="174" width="1" height="10" fill="#ff0000"/>
<rect x="120" y="184" width="1" height="10" fill="#ff0000"/>
<rect x="167" y="184" width="1" height="10" fill="#c80000"/>
<rect x="544" y="194" width="24" height="11" fill="#ffff00"/>
<rect x="546" y="194" width="1" height="11" fill="#c8c800"/>
<rect x="547" y="194" width="1" height="11" fill="#c8c800"/>
<rect x="549" y="194" width="1" height="11" fill="#c8c800"/>
<rect x="550" y="194" width="1" height="11" fill="#c8c800"/>
<rect x="553" y="194" width="1" height="11" fill="#c8c800"/>
<rect x="554" y="194" width="1" height="11" fill="#c8c800"/>
<rect x="556" y="194" width="1" height="11" fill="#c8c800"/>
<rect x="557" y="194" width="1" height="11" fill="#c8c800"/>
<rect x="560" y="194" width="1" height="11" fill="#c8c800"/>
<rect x="561" y="194" width="1" height="11" fill="#c8c800"/>
<rect x="563" y="194" width="1" height="11" fill="#c8c800"/>
<rect x="564" y="194" width="1" height="11" fill="#c8c800"/>
<rect x="119" y="205" width="1" height="10" fill="#ffff00"/>
<rect x="166" y="205" width="1" height="10" fill="#c8c800"/>
<rect x="260" y="205" width="1" height="10" fill="#ffff00"/>
<rect x="307" y="205" width="1" height="10" fill="#c8c800"/>
<rect x="401" y="205" width="1" height="10" fill="#ffff00"/>
<rect x="448" y="205" width="1" height="10" fill="#c8c800"/>
<rect x="542" y="205" width="1" height="10" fill="#ffff00"/>
<rect x="589" y="205" width="1" height="10" fill="#c8c800"/>
<rect x="354" y="215" width="3" height="11" fill="#ffff00"/>
<rect x="495" y="215" width="3" height="11" fill="#c8c800"/>
<rect x="636" y="215" width="3" height="11" fill="#ffff00"/>
<rect x="237" y="226" width="7" height="10" fill="#ffff00"/>
<rect x="213" y="236" width="6" height="11" fill="#ffff00"/>
<rect x="415" y="247" width="2" height="10" fill="#ff0000"/>
<rect x="420" y="247" width="3" height="10" fill="#c80000"/>
<rect x="147" y="257" width="1" height="10" fill="#ff0000"/>
<rect x="194" y="257" width="1" height="10" fill="#ff0000"/>
<rect x="217" y="257" width="1" height="10" fill="#ff0000"/>
<rect x="240" y="257" width="2" height="10" fill="#c80000"/>
<rect x="287" y="257" width="2" height="10" fill="#ff0000"/>
<rect x="334" y="257" width="2" height="10" fill="#c80000"/>
<rect x="381" y="257" width="2" height="10" fill="#ff0000"/>
<rect x="428" y="257" width="2" height="10" fill="#ff0000"/>
<rect x="475" y="257" width="2" height="10" fill="#ff0000"/>
<rect x="522" y="257" width="1" height="10" fill="#ff0000"/>
<rect x="569" y="257" width="1" height="10" fill="#ff0000"/>
<rect x="592" y="257" width="2" height="10" fill="#c80000"/>
<rect x="616" y="257" width="1" height="10" fill="#ff0000"/>
<rect x="123" y="267" width="3" height="11" fill="#ff0000"/>
<rect x="170" y="267" width="3" height="11" fill="#c80000"/>
<rect x="264" y="267" width="3" height="11" fill="#ff0000"/>
<rect x="311" y="267" width="3" height="11" fill="#c80000"/>
<rect x="358" y="267" width="3" height="11" fill="#ff0000"/>
<rect x="405" y="267" width="2" height="11" fill="#c80000"/>
<rect x="452" y="267" width="3" height="11" fill="#ff0000"/>
<rect x="499" y="267" width="2" height="11" fill="#c80000"/>
<rect x="639" y="267" width="3" height="11" fill="#ff0000"/>
<rect x="125" y="278" width="4" height="10" fill="#ff0000"/>
<rect x="172" y="278" width="4" height="10" fill="#c80000"/>
<rect x="219" y="278" width="4" height="10" fill="#ff0000"/>
<rect x="266" y="278" width="4" height="10" fill="#c80000"/>
<rect x="313" y="278" width="4" height="10" fill="#ff0000"/>
<rect x="360" y="278" width="3" height="10" fill="#c80000"/>
<rect x="407" y="278" width="3" height="10" fill="#ff0000"/>
<rect x="454" y="278" width="3" height="10" fill="#c80000"/>
<rect x="501" y="278" width="3" height="10" fill="#ff0000"/>
<rect x="594" y="278" width="4" height="10" fill="#c80000"/>
<rect x="641" y="278" width="4" height="10" fill="#ff0000"/>
<rect x="149" y="288" width="2" height="11" fill="#ff0000"/>
<rect x="196" y="288" width="2" height="11" fill="#c80000"/>
<rect x="242" y="288" width="3" height="11" fill="#ff0000"/>
<rect x="336" y="288" width="3" height="11" fill="#c80000"/>
<rect x="383" y="288" width="3" height="11" fill="#ff0000"/>
<rect x="430" y="288" width="3" height="11" fill="#c80000"/>
<rect x="477" y="288" width="3" height="11" fill="#ff0000"/>
<rect x="524" y="288" width="3" height="11" fill="#c80000"/>
<rect x="331" y="299" width="1" height="10" fill="#80d8ea"/>
<rect x="330" y="309" width="1" height="10" fill="#80d8ea"/>
<rect x="330" y="319" width="1" height="11" fill="#00ff00"/>
<rect x="329" y="330" width="1" height="10" fill="#80d8ea"/>
<rect x="328" y="340" width="1" height="11" fill="#00ff00"/>
<rect x="327" y="351" width="1" height="10" fill="#80d8ea"/>
<rect x="327" y="361" width="1" height="11" fill="#00ff00"/>
<rect x="149" y="372" width="1" height="10" fill="#80d8ea"/>
<rect x="184" y="372" width="1" height="10" fill="#00c0e0"/>
<rect x="219" y="372" width="1" height="10" fill="#80d8ea"/>
<rect x="254" y="372" width="1" height="10" fill="#00c0e0"/>
<rect x="325" y="372" width="1" height="10" fill="#80d8ea"/>
<rect x="360" y="372" width="1" height="10" fill="#00c0e0"/>
<rect x="395" y="372" width="1" height="10" fill="#80d8ea"/>
<rect x="430" y="372" width="1" height="10" fill="#00c0e0"/>
<rect x="466" y="372" width="1" height="10" fill="#80d8ea"/>
<rect x="536" y="372" width="1" height="10" fill="#00c0e0"/>
<rect x="572" y="372" width="1" height="10" fill="#80d8ea"/>
<rect x="606" y="372" width="1" height="10" fill="#00c0e0"/>
<rect x="289" y="382" width="2" height="10" fill="#80d8ea"/>
<rect x="501" y="382" width="2" height="10" fill="#00c0e0"/>
<rect x="154" y="392" width="3" height="11" fill="#00ff00"/>
<rect x="295" y="392" width="2" height="11" fill="#00ff00"/>
<rect x="436" y="392" width="2" height="11" fill="#00ff00"/>
<rect x="506" y="392" width="3" height="11" fill="#00ff00"/>
<rect x="600" y="392" width="2" height="11" fill="#00ff00"/>
<rect x="131" y="403" width="2" height="10" fill="#00ff00"/>
<rect x="178" y="403" width="2" height="10" fill="#00ff00"/>
<rect x="201" y="403" width="2" height="10" fill="#00ff00"/>
<rect x="225" y="403" width="2" height="10" fill="#00ff00"/>
<rect x="248" y="403" width="2" height="10" fill="#00ff00"/>
<rect x="272" y="403" width="2" height="10" fill="#00ff00"/>
<rect x="319" y="403" width="2" height="10" fill="#00ff00"/>
<rect x="342" y="403" width="2" height="10" fill="#00ff00"/>
<rect x="366" y="403" width="2" height="10" fill="#00ff00"/>
<rect x="389" y="403" width="2" height="10" fill="#00ff00"/>
<rect x="413" y="403" width="2" height="10" fill="#00ff00"/>
<rect x="460" y="403" width="2" height="10" fill="#00ff00"/>
<rect x="483" y="403" width="2" height="10" fill="#00ff00"/>
<rect x="530" y="403" width="2" height="10" fill="#00ff00"/>
<rect x="577" y="403" width="2" height="10" fill="#00ff00"/>
<rect x="624" y="403" width="2" height="10" fill="#00ff00"/>
<rect x="114" y="427" width="1" height="1" fill="#fff"/>
<rect x="120" y="427" width="1" height="1" fill="#fff"/>
<rect x="126" y="427" width="1" height="1" fill="#fff"/>
<rect x="132" y="427" width="1" height="1" fill="#fff"/>
<rect x="138" y="427" width="1" height="1" fill="#fff"/>
<rect x="144" y="427" width="1" height="1" fill="#fff"/>
<rect x="150" y="427" width="1" height="1" fill="#fff"/>
<rect x="156" y="427" width="1" height="1" fill="#fff"/>
<rect x="162" y="427" width="1" height="1" fill="#fff"/>
<rect x="168" y="427" width="1" height="1" fill="#fff"/>
<rect x="174" y="427" width="1" height="1" fill="#fff"/>
<rect x="180" y="427" width="1" height="1" fill="#fff"/>
<rect x="186" y="427" width="1" height="1" fill="#fff"/>
<rect x="192" y="427" width="1" height="1" fill="#fff"/>
<rect x="198" y="427" width="1" height="1" fill="#fff"/>
<rect x="204" y="427" width="1" height="1" fill="#fff"/>
<rect x="210" y="427" width="1" height="1" fill="#fff"/>
<rect x="216" y="427" width="1" height="1" fill="#fff"/>
<rect x="222" y="427" width="1" height="1" fill="#fff"/>
<rect x="228" y="427" width="1" height="1" fill="#fff"/>
<rect x="234" y="427" width="1" height="1" fill="#fff"/>
<rect x="240" y="427" width="1" height="1" fill="#fff"/>
<rect x="246" y="427" width="1" height="1" fill="#fff"/>
<rect x="252" y="427" width="1" height="1" fill="#fff"/>
<rect x="258" y="427" width="1" height="1" fill="#fff"/>
<rect x="264" y="427" width="1" height="1" fill="#fff"/>
<rect x="270" y="427" width="1" height="1" fill="#fff"/>
<rect x="276" y="427" width="1" height="1" fill="#fff"/>
<rect x="282" y="427" width="1" height="1" fill="#fff"/>
<rect x="288" y="427" width="1" height="1" fill="#fff"/>
<rect x="294" y="427" width="1" height="1" fill="#fff"/>
<rect x="300" y="427" width="1" height="1" fill="#fff"/>
<rect x="306" y="427" width="1" height="1" fill="#fff"/>
<rect x="312" y="427" width="1" height="1" fill="#fff"/>
<rect x="318" y="427" width="1" height="1" fill="#fff"/>
<rect x="324" y="427" width="1" height="1" fill="#fff"/>
<rect x="330" y="427" width="1" height="1" fill="#fff"/>
<rect x="336" y="427" width="1" height="1" fill="#fff"/>
<rect x="342" y="427" width="1" height="1" fill="#fff"/>
<rect x="348" y="427" width="1" height="1" fill="#fff"/>
<rect x="354" y="427" width="1" height="1" fill="#fff"/>
<rect x="360" y="427" width="1" height="1" fill="#fff"/>
<rect x="366" y="427" width="1" height="1" fill="#fff"/>
<rect x="372" y="427" width="1" height="1" fill="#fff"/>
<rect x="378" y="427" width="1" height="1" fill="#fff"/>
<rect x="384" y="427" width="1" height="1" fill="#fff"/>
<rect x="390" y="427" width="1" height="1" fill="#fff"/>
<rect x="396" y="427" width="1" height="1" fill="#fff"/>
<rect x="402" y="427" width="1" height="1" fill="#fff"/>
<rect x="408" y="427" width="1" height="1" fill="#fff"/>
<rect x="414" y="427" width="1" height="1" fill="#fff"/>
<rect x="420" y="427" width="1" height="1" fill="#fff"/>
<rect x="426" y="427" width="1" height="1" fill="#fff"/>
<rect x="432" y="427" width="1" height="1" fill="#fff"/>
<rect x="438" y="427" width="1" height="1" fill="#fff"/>
<rect x="444" y="427" width="1" height="1" fill="#fff"/>
<rect x="450" y="427" width="1" height="1" fill="#fff"/>
<rect x="456" y="427" width="1" height="1" fill="#fff"/>
<rect x="462" y="427" width="1" height="1" fill="#fff"/>
<rect x="468" y="427" width="1" height="1" fill="#fff"/>
<rect x="474" y="427" width="1" height="1" fill="#fff"/>
<rect x="480" y="427" width="1" height="1" fill="#fff"/>
<rect x="486" y="427" width="1" height="1" fill="#fff"/>
<rect x="492" y="427" width="1" height="1" fill="#fff"/>
<rect x="498" y="427" width="1" height="1" fill="#fff"/>
<rect x="504" y="427" width="1" height="1" fill="#fff"/>
<rect x="510" y="427" width="1" height="1" fill="#fff"/>
<rect x="516" y="427" width="1" height="1" fill="#fff"/>
<rect x="522" y="427" width="1" height="1" fill="#fff"/>
<rect x="528" y="427" width="1" height="1" fill="#fff"/>
<rect x="534" y="427" width="1" height="1" fill="#fff"/>
<rect x="540" y="427" width="1" height="1" fill="#fff"/>
<rect x="546" y="427" width="1" height="1" fill="#fff"/>
<rect x="552" y="427" width="1" height="1" fill="#fff"/>
<rect x="558" y="427" width="1" height="1" fill="#fff"/>
<rect x="564" y="427" width="1" height="1" fill="#fff"/>
<rect x="570" y="427" width="1" height="1" fill="#fff"/>
<rect x="576" y="427" width="1" height="1" fill="#fff"/>
<rect x="582" y="427" width="1" height="1" fill="#fff"/>
<rect x="588" y="427" width="1" height="1" fill="#fff"/>
<rect x="594" y="427" width="1" height="1" fill="#fff"/>
<rect x="600" y="427" width="1" height="1" fill="#fff"/>
<rect x="606" y="427" width="1" height="1" fill="#fff"/>
<rect x="612" y="427" width="1" height="1" fill="#fff"/>
<rect x="618" y="427" width="1" height="1" fill="#fff"/>
<rect x="624" y="427" width="1" height="1" fill="#fff"/>
<rect x="630" y="427" width="1" height="1" fill="#fff"/>
<rect x="636" y="427" width="1" height="1" fill="#fff"/>
<rect x="642" y="427" width="1" height="1" fill="#fff"/>
<rect x="648" y="427" width="1" height="1" fill="#fff"/>
<rect x="654" y="427" width="1" height="1" fill="#fff"/>
<rect x="660" y="427" width="1" height="1" fill="#fff"/>
<rect x="666" y="427" width="1" height="1" fill="#fff"/>
<rect x="114" y="439" width="1" height="1" fill="#fff"/>
<rect x="120" y="439" width="1" height="1" fill="#fff"/>
<rect x="126" y="439" width="1" height="1" fill="#fff"/>
<rect x="132" y="439" width="1" height="1" fill="#fff"/>
<rect x="138" y="439" width="1" height="1" fill="#fff"/>
<rect x="144" y="439" width="1" height="1" fill="#fff"/>
<rect x="150" y="439" width="1" height="1" fill="#fff"/>
<rect x="156" y="439" width="1" height="1" fill="#fff"/>
<rect x="162" y="439" width="1" height="1" fill="#fff"/>
<rect x="168" y="439" width="1" height="1" fill="#fff"/>
<rect x="174" y="439" width="1" height="1" fill="#fff"/>
<rect x="180" y="439" width="1" height="1" fill="#fff"/>
<rect x="186" y="439" width="1" height="1" fill="#fff"/>
<rect x="192" y="439" width="1" height="1" fill="#fff"/>
<rect x="198" y="439" width="1" height="1" fill="#fff"/>
<rect x="204" y="439" width="1" height="1" fill="#fff"/>
<rect x="210" y="439" width="1" height="1" fill="#fff"/>
<rect x="216" y="439" width="1" height="1" fill="#fff"/>
<rect x="222" y="439" width="1" height="1" fill="#fff"/>
<rect x="228" y="439" width="1" height="1" fill="#fff"/>
<rect x="234" y="439" width="1" height="1" fill="#fff"/>
<rect x="240" y="439" width="1" height="1" fill="#fff"/>
<rect x="246" y="439" width="1" height="1" fill="#fff"/>
<rect x="252" y="439" width="1" height="1" fill="#fff"/>
<rect x="258" y="439" width="1" height="1" fill="#fff"/>
<rect x="264" y="439" width="1" height="1" fill="#fff"/>
<rect x="270" y="439" width="1" height="1" fill="#fff"/>
<rect x="276" y="439" width="1" height="1" fill="#fff"/>
<rect x="282" y="439" width="1" height="1" fill="#fff"/>
<rect x="288" y="439" width="1" height="1" fill="#fff"/>
<rect x="294" y="439" width="1" height="1" fill="#fff"/>
<rect x="300" y="439" width="1" height="1" fill="#fff"/>
<rect x="306" y="439" width="1" height="1" fill="#fff"/>
<rect x="312" y="439" width="1" height="1" fill="#fff"/>
<rect x="318" y="439" width="1" height="1" fill="#fff"/>
<rect x="324" y="439" width="1" height="1" fill="#fff"/>
<rect x="330" y="439" width="1" height="1" fill="#fff"/>
<rect x="336" y="439" width="1" height="1" fill="#fff"/>
<rect x="342" y="439" width="1" height="1" fill="#fff"/>
<rect x="348" y="439" width="1" height="1" fill="#fff"/>
<rect x="354" y="439" width="1" height="1" fill="#fff"/>
<rect x="360" y="439" width="1" height="1" fill="#fff"/>
<rect x="366" y="439" width="1" height="1" fill="#fff"/>
<rect x="372" y="439" width="1" height="1" fill="#fff"/>
<rect x="378" y="439" width="1" height="1" fill="#fff"/>
<rect x="384" y="439" width="1" height="1" fill="#fff"/>
<rect x="390" y="439" width="1" height="1" fill="#fff"/>
<rect x="396" y="439" width="1" height="1" fill="#fff"/>
<rect x="402" y="439" width="1" height="1" fill="#fff"/>
<rect x="408" y="439" width="1" height="1" fill="#fff"/>
<rect x="414" y="439" width="1" height="1" fill="#fff"/>
<rect x="420" y="439" width="1" height="1" fill="#fff"/>
<rect x="426" y="439" width="1" height="1" fill="#fff"/>
<rect x="432" y="439" width="1" height="1" fill="#fff"/>
<rect x="438" y="439" width="1" height="1" fill="#fff"/>
<rect x="444" y="439" width="1" height="1" fill="#fff"/>
<rect x="450" y="439" width="1" height="1" fill="#fff"/>
<rect x="456" y="439" width="1" height="1" fill="#fff"/>
<rect x="462" y="439" width="1" height="1" fill="#fff"/>
<rect x="468" y="439" width="1" height="1" fill="#fff"/>
<rect x="474" y="439" width="1" height="1" fill="#fff"/>
<rect x="480" y="439" width="1" height="1" fill="#fff"/>
<rect x="486" y="439" width="1" height="1" fill="#fff"/>
<rect x="492" y="439" width="1" height="1" fill="#fff"/>
<rect x="498" y="439" width="1" height="1" fill="#fff"/>
<rect x="504" y="439" width="1" height="1" fill="#fff"/>
<rect x="510" y="439" width="1" height="1" fill="#fff"/>
<rect x="516" y="439" width="1" height="1" fill="#fff"/>
<rect x="522" y="439" width="1" height="1" fill="#fff"/>
<rect x="528" y="439" width="1" height="1" fill="#fff"/>
<rect x="534" y="439" width="1" height="1" fill="#fff"/>
<rect x="540" y="439" width="1" height="1" fill="#fff"/>
<rect x="546" y="439" width="1" height="1" fill="#fff"/>
<rect x="552" y="439" width="1" height="1" fill="#fff"/>
<rect x="558" y="439" width="1" height="1" fill="#fff"/>
<rect x="564" y="439" width="1" height="1" fill="#fff"/>
<rect x="570" y="439" width="1" height="1" fill="#fff"/>
<rect x="576" y="439" width="1" height="1" fill="#fff"/>
<rect x="582" y="439" width="1" height="1" fill="#fff"/>
<rect x="588" y="439" width="1" height="1" fill="#fff"/>
<rect x="594" y="439" width="1" height="1" fill="#fff"/>
<rect x="600" y="439" width="1" height="1" fill="#fff"/>
<rect x="606" y="439" width="1" height="1" fill="#fff"/>
<rect x="612" y="439" width="1" height="1" fill="#fff"/>
<rect x="618" y="439" width="1" height="1" fill="#fff"/>
<rect x="624" y="439" width="1" height="1" fill="#fff"/>
<rect x="630" y="439" width="1" height="1" fill="#fff"/>
<rect x="636" y="439" width="1" height="1" fill="#fff"/>
<rect x="642" y="439" width="1" height="1" fill="#fff"/>
<rect x="648" y="439" width="1" height="1" fill="#fff"/>
<rect x="654" y="439" width="1" height="1" fill="#fff"/>
<rect x="660" y="439" width="1" height="1" fill="#fff"/>
<rect x="666" y="439" width="1" height="1" fill="#fff"/>
<rect x="114" y="472" width="1" height="1" fill="#fff"/>
<rect x="120" y="472" width="1" height="1" fill="#fff"/>
<rect x="126" y="472" width="1" height="1" fill="#fff"/>
<rect x="132" y="472" width="1" height="1" fill="#fff"/>
<rect x="138" y="472" width="1" height="1" fill="#fff"/>
<rect x="144" y="472" width="1" height="1" fill="#fff"/>
<rect x="150" y="472" width="1" height="1" fill="#fff"/>
<rect x="156" y="472" width="1" height="1" fill="#fff"/>
<rect x="162" y="472" width="1" height="1" fill="#fff"/>
<rect x="168" y="472" width="1" height="1" fill="#fff"/>
<rect x="174" y="472" width="1" height="1" fill="#fff"/>
<rect x="180" y="472" width="1" height="1" fill="#fff"/>
<rect x="186" y="472" width="1" height="1" fill="#fff"/>
<rect x="192" y="472" width="1" height="1" fill="#fff"/>
<rect x="198" y="472" width="1" height="1" fill="#fff"/>
<rect x="204" y="472" width="1" height="1" fill="#fff"/>
<rect x="210" y="472" width="1" height="1" fill="#fff"/>
<rect x="216" y="472" width="1" height="1" fill="#fff"/>
<rect x="222" y="472" width="1" height="1" fill="#fff"/>
<rect x="228" y="472" width="1" height="1" fill="#fff"/>
<rect x="234" y="472" width="1" height="1" fill="#fff"/>
<rect x="240" y="472" width="1" height="1" fill="#fff"/>
<rect x="246" y="472" width="1" height="1" fill="#fff"/>
<rect x="252" y="472" width="1" height="1" fill="#fff"/>
<rect x="258" y="472" width="1" height="1" fill="#fff"/>
<rect x="264" y="472" width="1" height="1" fill="#fff"/>
<rect x="270" y="472" width="1" height="1" fill="#fff"/>
<rect x="276" y="472" width="1" height="1" fill="#fff"/>
<rect x="282" y="472" width="1" height="1" fill="#fff"/>
<rect x="288" y="472" width="1" height="1" fill="#fff"/>
<rect x="294" y="472" width="1" height="1" fill="#fff"/>
<rect x="300" y="472" width="1" height="1" fill="#fff"/>
<rect x="306" y="472" width="1" height="1" fill="#fff"/>
<rect x="312" y="472" width="1" height="1" fill="#fff"/>
<rect x="318" y="472" width="1" height="1" fill="#fff"/>
<rect x="324" y="472" width="1" height="1" fill="#fff"/>
<rect x="330" y="472" width="1" height="1" fill="#fff"/>
<rect x="336" y="472" width="1" height="1" fill="#fff"/>
<rect x="342" y="472" width="1" height="1" fill="#fff"/>
<rect x="348" y="472" width="1" height="1" fill="#fff"/>
<rect x="354" y="472" width="1" height="1" fill="#fff"/>
<rect x="360" y="472" width="1" height="1" fill="#fff"/>
<rect x="366" y="472" width="1" height="1" fill="#fff"/>
<rect x="372" y="472" width="1" height="1" fill="#fff"/>
<rect x="378" y="472" width="1" height="1" fill="#fff"/>
<rect x="384" y="472" width="1" height="1" fill="#fff"/>
<rect x="390" y="472" width="1" height="1" fill="#fff"/>
<rect x="396" y="472" width="1" height="1" fill="#fff"/>
<rect x="402" y="472" width="1" height="1" fill="#fff"/>
<rect x="408" y="472" width="1" height="1" fill="#fff"/>
<rect x="414" y="472" width="1" height="1" fill="#fff"/>
<rect x="420" y="472" width="1" height="1" fill="#fff"/>
<rect x="426" y="472" width="1" height="1" fill="#fff"/>
<rect x="432" y="472" width="1" height="1" fill="#fff"/>
<rect x="438" y="472" width="1" height="1" fill="#fff"/>
<rect x="444" y="472" width="1" height="1" fill="#fff"/>
<rect x="450" y="472" width="1" height="1" fill="#fff"/>
<rect x="456" y="472" width="1" height="1" fill="#fff"/>
<rect x="462" y="472" width="1" height="1" fill="#fff"/>
<rect x="468" y="472" width="1" height="1" fill="#fff"/>
<rect x="474" y="472" width="1" height="1" fill="#fff"/>
<rect x="480" y="472" width="1" height="1" fill="#fff"/>
<rect x="486" y="472" width="1" height="1" fill="#fff"/>
<rect x="492" y="472" width="1" height="1" fill="#fff"/>
<rect x="498" y="472" width="1" height="1" fill="#fff"/>
<rect x="504" y="472" width="1" height="1" fill="#fff"/>
<rect x="510" y="472" width="1" height="1" fill="#fff"/>
<rect x="516" y="472" width="1" height="1" fill="#fff"/>
<rect x="522" y="472" width="1" height="1" fill="#fff"/>
<rect x="528" y="472" width="1" height="1" fill="#fff"/>
<rect x="534" y="472" width="1" height="1" fill="#fff"/>
<rect x="540" y="472" width="1" height="1" fill="#fff"/>
<rect x="546" y="472" width="1" height="1" fill="#fff"/>
<rect x="552" y="472" width="1" height="1" fill="#fff"/>
<rect x="558" y="472" width="1" height="1" fill="#fff"/>
<rect x="564" y="472" width="1" height="1" fill="#fff"/>
<rect x="570" y="472" width="1" height="1" fill="#fff"/>
<rect x="576" y="472" width="1" height="1" fill="#fff"/>
<rect x="582" y="472" width="1" height="1" fill="#fff"/>
<rect x="588" y="472" width="1" height="1" fill="#fff"/>
<rect x="594" y="472" width="1" height="1" fill="#fff"/>
<rect x="600" y="472" width="1" height="1" fill="#fff"/>
<rect x="606" y="472" width="1" height="1" fill="#fff"/>
<rect x="612" y="472" width="1" height="1" fill="#fff"/>
<rect x="618" y="472" width="1" height="1" fill="#fff"/>
<rect x="624" y="472" width="1" height="1" fill="#fff"/>
<rect x="630" y="472" width="1" height="1" fill="#fff"/>
<rect x="636" y="472" width="1" height="1" fill="#fff"/>
<rect x="642" y="472" width="1" height="1" fill="#fff"/>
<rect x="648" y="472" width="1" height="1" fill="#fff"/>
<rect x="654" y="472" width="1" height="1" fill="#fff"/>
<rect x="660" y="472" width="1" height="1" fill="#fff"/>
<rect x="666" y="472" width="1" height="1" fill="#fff"/>
<polygon points="109.0,484.0 109.0,454.8 108.8,454.8 117.0,454.8 119.3,453.3 121.5,452.1 123.8,458.4 126.8,457.4 129.8,458.4 132.0,458.4 133.6,450.3 136.6,454.4 138.8,458.1 143.3,469.4 145.6,470.9 148.6,474.7 150.1,465.3 153.1,467.4 156.1,453.3 159.1,458.1 161.4,462.6 162.9,462.3 165.9,468.6 171.2,471.7 175.7,465.6 177.2,467.9 180.2,459.6 183.2,464.9 186.2,456.3 190.0,464.1 193.7,470.2 197.5,471.7 201.2,480.7 203.5,470.2 206.0,471.4 209.8,480.7 210.5,484.0 212.8,484.0 213.5,473.9 215.0,474.7 218.8,453.6 220.3,438.3 223.3,438.6 224.8,440.8 227.1,432.3 230.1,434.8 236.1,452.9 240.6,432.6 243.6,425.0 246.6,427.3 248.9,431.8 250.4,422.3 253.4,428.8 255.6,423.2 258.6,425.0 260.2,427.7 261.7,429.5 264.7,432.6 269.2,432.3 272.2,434.8 274.4,425.8 278.2,431.0 282.0,440.0 288.7,458.9 291.0,443.1 294.7,448.3 297.5,435.3 299.5,438.6 302.5,447.6 304.8,454.4 307.0,453.6 310.8,458.9 313.0,457.8 316.8,458.1 318.8,460.8 320.6,451.4 322.8,455.1 324.3,460.8 325.8,452.9 327.3,447.6 330.3,423.5 332.6,416.8 335.6,422.8 339.4,425.8 341.6,429.5 343.9,420.2 346.1,425.0 349.9,434.1 353.3,440.8 355.9,431.8 357.4,428.8 359.7,427.7 361.2,415.3 364.2,415.7 365.7,419.0 366.4,413.5 370.9,413.5 373.2,422.0 376.2,426.5 381.5,440.0 386.7,446.1 389.7,450.3 391.2,440.8 394.5,448.8 396.3,442.3 399.0,444.6 400.5,447.6 402.0,446.1 405.0,451.4 409.5,450.9 412.6,454.8 414.8,439.3 417.8,433.3 420.8,437.8 422.8,431.0 425.3,436.3 429.4,446.1 431.4,436.3 433.6,436.8 435.1,441.6 438.1,427.3 441.9,436.3 445.6,443.8 448.6,446.1 451.7,450.6 454.7,449.4 457.7,450.6 459.5,453.6 461.4,443.8 464.4,447.6 467.4,440.8 471.2,451.4 475.0,462.6 477.2,461.1 480.2,463.4 482.9,467.9 485.5,458.9 488.0,467.1 491.8,475.4 494.3,478.4 497.0,466.4 499.3,466.8 501.5,449.8 503.0,446.1 505.3,447.6 508.3,435.3 512.1,442.3 519.6,461.1 524.8,469.4 528.6,470.9 529.8,475.4 531.6,467.1 534.6,473.2 536.9,467.1 540.6,473.2 542.1,476.2 544.4,477.7 557.2,468.6 570.7,458.9 573.0,446.1 575.2,449.8 577.5,446.1 580.5,436.3 583.0,440.1 586.8,446.8 589.0,443.8 591.3,446.8 595.0,449.4 599.5,452.9 601.8,439.3 604.1,441.6 606.3,446.1 607.8,440.1 610.1,437.1 612.8,424.3 616.1,430.3 619.1,435.6 623.6,447.6 625.9,439.3 628.1,441.6 635.6,462.6 637.9,452.9 640.2,451.4 641.7,453.6 644.7,452.1 646.9,455.1 650.7,464.9 656.7,484.0" fill="#fff" shape-rendering="crispEdges"/>
<rect x="659" y="479" width="1" height="5" fill="#fff"/>
<rect x="657" y="483" width="15" height="1" fill="#ff0000"/>
<rect x="210" y="483" width="4" height="1" fill="#ff0000"/>
</g>
<g fill="none" stroke-width="1" shape-rendering="crispEdges" stroke-linecap="square">
<path d="M199.5,6.5 L198.5,6.5 L197.5,7.5 L197.5,9.5 L197.5,10.5 L197.5,12.5 L198.5,13.5 L199.5,13.5 L200.5,13.5 L201.5,13.5 L202.5,12.5 L202.5,10.5 L202.5,9.5 L202.5,7.5 L201.5,6.5 L200.5,6.5 L199.5,6.5 M205.5,7.5 L206.5,7.5 L207.5,6.5 L207.5,13.5 M213.5,8.5 L212.5,9.5 L213.5,9.5 L213.5,9.5 L213.5,8.5 M213.5,13.5 L212.5,13.5 L213.5,13.5 L213.5,13.5 L213.5,13.5 M218.5,6.5 L217.5,6.5 L216.5,7.5 L216.5,9.5 L216.5,10.5 L216.5,12.5 L217.5,13.5 L218.5,13.5 L219.5,13.5 L220.5,13.5 L220.5,12.5 L221.5,10.5 L221.5,9.5 L220.5,7.5 L220.5,6.5 L219.5,6.5 L218.5,6.5 M225.5,6.5 L224.5,6.5 L223.5,7.5 L223.5,9.5 L223.5,10.5 L223.5,12.5 L224.5,13.5 L225.5,13.5 L226.5,13.5 L227.5,13.5 L228.5,12.5 L228.5,10.5 L228.5,9.5 L228.5,7.5 L227.5,6.5 L226.5,6.5 L225.5,6.5" stroke="#fff"/>
<path d="M199.5,494.5 L198.5,494.5 L197.5,495.5 L197.5,497.5 L197.5,498.5 L197.5,500.5 L198.5,501.5 L199.5,501.5 L200.5,501.5 L201.5,501.5 L202.5,500.5 L202.5,498.5 L202.5,497.5 L202.5,495.5 L201.5,494.5 L200.5,494.5 L199.5,494.5 M205.5,495.5 L206.5,495.5 L207.5,494.5 L207.5,501.5 M213.5,496.5 L212.5,497.5 L213.5,497.5 L213.5,497.5 L213.5,496.5 M213.5,501.5 L212.5,501.5 L213.5,501.5 L213.5,501.5 L213.5,501.5 M218.5,494.5 L217.5,494.5 L216.5,495.5 L216.5,497.5 L216.5,498.5 L216.5,500.5 L217.5,501.5 L218.5,501.5 L219.5,501.5 L220.5,501.5 L220.5,500.5 L221.5,498.5 L221.5,497.5 L220.5,495.5 L220.5,494.5 L219.5,494.5 L218.5,494.5 M225.5,494.5 L224.5,494.5 L223.5,495.5 L223.5,497.5 L223.5,498.5 L223.5,500.5 L224.5,501.5 L225.5,501.5 L226.5,501.5 L227.5,501.5 L228.5,500.5 L228.5,498.5 L228.5,497.5 L228.5,495.5 L227.5,494.5 L226.5,494.5 L225.5,494.5" stroke="#fff"/>
<path d="M316.5,6.5 L315.5,6.5 L314.5,7.5 L314.5,9.5 L314.5,10.5 L314.5,12.5 L315.5,13.5 L316.5,13.5 L317.5,13.5 L318.5,13.5 L319.5,12.5 L319.5,10.5 L319.5,9.5 L319.5,7.5 L318.5,6.5 L317.5,6.5 L316.5,6.5 M326.5,7.5 L326.5,6.5 L325.5,6.5 L324.5,6.5 L323.5,6.5 L322.5,7.5 L322.5,9.5 L322.5,11.5 L322.5,12.5 L323.5,13.5 L324.5,13.5 L324.5,13.5 L325.5,13.5 L326.5,12.5 L327.5,11.5 L327.5,11.5 L326.5,10.5 L325.5,9.5 L324.5,9.5 L324.5,9.5 L323.5,9.5 L322.5,10.5 L322.5,11.5 M330.5,8.5 L329.5,9.5 L330.5,9.5 L330.5,9.5 L330.5,8.5 M330.5,13.5 L329.5,13.5 L330.5,13.5 L330.5,13.5 L330.5,13.5 M335.5,6.5 L334.5,6.5 L333.5,7.5 L333.5,9.5 L333.5,10.5 L333.5,12.5 L334.5,13.5 L335.5,13.5 L336.5,13.5 L337.5,13.5 L337.5,12.5 L338.5,10.5 L338.5,9.5 L337.5,7.5 L337.5,6.5 L336.5,6.5 L335.5,6.5 M342.5,6.5 L341.5,6.5 L340.5,7.5 L340.5,9.5 L340.5,10.5 L340.5,12.5 L341.5,13.5 L342.5,13.5 L343.5,13.5 L344.5,13.5 L345.5,12.5 L345.5,10.5 L345.5,9.5 L345.5,7.5 L344.5,6.5 L343.5,6.5 L342.5,6.5" stroke="#fff"/>
<path d="M316.5,494.5 L315.5,494.5 L314.5,495.5 L314.5,497.5 L314.5,498.5 L314.5,500.5 L315.5,501.5 L316.5,501.5 L317.5,501.5 L318.5,501.5 L319.5,500.5 L319.5,498.5 L319.5,497.5 L319.5,495.5 L318.5,494.5 L317.5,494.5 L316.5,494.5 M326.5,495.5 L326.5,494.5 L325.5,494.5 L324.5,494.5 L323.5,494.5 L322.5,495.5 L322.5,497.5 L322.5,499.5 L322.5,500.5 L323.5,501.5 L324.5,501.5 L324.5,501.5 L325.5,501.5 L326.5,500.5 L327.5,499.5 L327.5,499.5 L326.5,498.5 L325.5,497.5 L324.5,497.5 L324.5,497.5 L323.5,497.5 L322.5,498.5 L322.5,499.5 M330.5,496.5 L329.5,497.5 L330.5,497.5 L330.5,497.5 L330.5,496.5 M330.5,501.5 L329.5,501.5 L330.5,501.5 L330.5,501.5 L330.5,501.5 M335.5,494.5 L334.5,494.5 L333.5,495.5 L333.5,497.5 L333.5,498.5 L333.5,500.5 L334.5,501.5 L335.5,501.5 L336.5,501.5 L337.5,501.5 L337.5,500.5 L338.5,498.5 L338.5,497.5 L337.5,495.5 L337.5,494.5 L336.5,494.5 L335.5,494.5 M342.5,494.5 L341.5,494.5 L340.5,495.5 L340.5,497.5 L340.5,498.5 L340.5,500.5 L341.5,501.5 L342.5,501.5 L343.5,501.5 L344.5,501.5 L345.5,500.5 L345.5,498.5 L345.5,497.5 L345.5,495.5 L344.5,494.5 L343.5,494.5 L342.5,494.5" stroke="#fff"/>
<path d="M433.5,7.5 L434.5,7.5 L435.5,6.5 L435.5,13.5 M440.5,7.5 L441.5,7.5 L442.5,6.5 L442.5,13.5 M448.5,8.5 L447.5,9.5 L448.5,9.5 L448.5,9.5 L448.5,8.5 M448.5,13.5 L447.5,13.5 L448.5,13.5 L448.5,13.5 L448.5,13.5 M453.5,6.5 L452.5,6.5 L451.5,7.5 L451.5,9.5 L451.5,10.5 L451.5,12.5 L452.5,13.5 L453.5,13.5 L454.5,13.5 L455.5,13.5 L455.5,12.5 L456.5,10.5 L456.5,9.5 L455.5,7.5 L455.5,6.5 L454.5,6.5 L453.5,6.5 M460.5,6.5 L459.5,6.5 L458.5,7.5 L458.5,9.5 L458.5,10.5 L458.5,12.5 L459.5,13.5 L460.5,13.5 L461.5,13.5 L462.5,13.5 L463.5,12.5 L463.5,10.5 L463.5,9.5 L463.5,7.5 L462.5,6.5 L461.5,6.5 L460.5,6.5" stroke="#fff"/>
<path d="M433.5,495.5 L434.5,495.5 L435.5,494.5 L435.5,501.5 M440.5,495.5 L441.5,495.5 L442.5,494.5 L442.5,501.5 M448.5,496.5 L447.5,497.5 L448.5,497.5 L448.5,497.5 L448.5,496.5 M448.5,501.5 L447.5,501.5 L448.5,501.5 L448.5,501.5 L448.5,501.5 M453.5,494.5 L452.5,494.5 L451.5,495.5 L451.5,497.5 L451.5,498.5 L451.5,500.5 L452.5,501.5 L453.5,501.5 L454.5,501.5 L455.5,501.5 L455.5,500.5 L456.5,498.5 L456.5,497.5 L455.5,495.5 L455.5,494.5 L454.5,494.5 L453.5,494.5 M460.5,494.5 L459.5,494.5 L458.5,495.5 L458.5,497.5 L458.5,498.5 L458.5,500.5 L459.5,501.5 L460.5,501.5 L461.5,501.5 L462.5,501.5 L463.5,500.5 L463.5,498.5 L463.5,497.5 L463.5,495.5 L462.5,494.5 L461.5,494.5 L460.5,494.5" stroke="#fff"/>
<path d="M550.5,7.5 L551.5,7.5 L552.5,6.5 L552.5,13.5 M561.5,7.5 L561.5,6.5 L560.5,6.5 L559.5,6.5 L558.5,6.5 L557.5,7.5 L557.5,9.5 L557.5,11.5 L557.5,12.5 L558.5,13.5 L559.5,13.5 L559.5,13.5 L560.5,13.5 L561.5,12.5 L562.5,11.5 L562.5,11.5 L561.5,10.5 L560.5,9.5 L559.5,9.5 L559.5,9.5 L558.5,9.5 L557.5,10.5 L557.5,11.5 M565.5,8.5 L564.5,9.5 L565.5,9.5 L565.5,9.5 L565.5,8.5 M565.5,13.5 L564.5,13.5 L565.5,13.5 L565.5,13.5 L565.5,13.5 M570.5,6.5 L569.5,6.5 L568.5,7.5 L568.5,9.5 L568.5,10.5 L568.5,12.5 L569.5,13.5 L570.5,13.5 L571.5,13.5 L572.5,13.5 L572.5,12.5 L573.5,10.5 L573.5,9.5 L572.5,7.5 L572.5,6.5 L571.5,6.5 L570.5,6.5 M577.5,6.5 L576.5,6.5 L575.5,7.5 L575.5,9.5 L575.5,10.5 L575.5,12.5 L576.5,13.5 L577.5,13.5 L578.5,13.5 L579.5,13.5 L580.5,12.5 L580.5,10.5 L580.5,9.5 L580.5,7.5 L579.5,6.5 L578.5,6.5 L577.5,6.5" stroke="#fff"/>
<path d="M550.5,495.5 L551.5,495.5 L552.5,494.5 L552.5,501.5 M561.5,495.5 L561.5,494.5 L560.5,494.5 L559.5,494.5 L558.5,494.5 L557.5,495.5 L557.5,497.5 L557.5,499.5 L557.5,500.5 L558.5,501.5 L559.5,501.5 L559.5,501.5 L560.5,501.5 L561.5,500.5 L562.5,499.5 L562.5,499.5 L561.5,498.5 L560.5,497.5 L559.5,497.5 L559.5,497.5 L558.5,497.5 L557.5,498.5 L557.5,499.5 M565.5,496.5 L564.5,497.5 L565.5,497.5 L565.5,497.5 L565.5,496.5 M565.5,501.5 L564.5,501.5 L565.5,501.5 L565.5,501.5 L565.5,501.5 M570.5,494.5 L569.5,494.5 L568.5,495.5 L568.5,497.5 L568.5,498.5 L568.5,500.5 L569.5,501.5 L570.5,501.5 L571.5,501.5 L572.5,501.5 L572.5,500.5 L573.5,498.5 L573.5,497.5 L572.5,495.5 L572.5,494.5 L571.5,494.5 L570.5,494.5 M577.5,494.5 L576.5,494.5 L575.5,495.5 L575.5,497.5 L575.5,498.5 L575.5,500.5 L576.5,501.5 L577.5,501.5 L578.5,501.5 L579.5,501.5 L580.5,500.5 L580.5,498.5 L580.5,497.5 L580.5,495.5 L579.5,494.5 L578.5,494.5 L577.5,494.5" stroke="#fff"/>
<path d="M309.5,511.5 L310.5,510.5 L311.5,509.5 L311.5,517.5 M320.5,512.5 L320.5,513.5 L319.5,514.5 L318.5,514.5 L318.5,514.5 L316.5,514.5 L316.5,513.5 L315.5,512.5 L315.5,511.5 L316.5,510.5 L316.5,510.5 L318.5,509.5 L318.5,509.5 L319.5,510.5 L320.5,510.5 L320.5,512.5 L320.5,514.5 L320.5,516.5 L319.5,517.5 L318.5,517.5 L317.5,517.5 L316.5,517.5 L316.5,516.5 M328.5,512.5 L328.5,513.5 L327.5,514.5 L326.5,514.5 L325.5,514.5 L324.5,514.5 L323.5,513.5 L323.5,512.5 L323.5,511.5 L323.5,510.5 L324.5,510.5 L325.5,509.5 L326.5,509.5 L327.5,510.5 L328.5,510.5 L328.5,512.5 L328.5,514.5 L328.5,516.5 L327.5,517.5 L326.5,517.5 L325.5,517.5 L324.5,517.5 L323.5,516.5 M336.5,509.5 L332.5,517.5 M331.5,509.5 L336.5,509.5 M345.5,508.5 L338.5,520.5 M349.5,509.5 L348.5,510.5 L347.5,511.5 L347.5,513.5 L347.5,514.5 L347.5,516.5 L348.5,517.5 L349.5,517.5 L350.5,517.5 L351.5,517.5 L352.5,516.5 L352.5,514.5 L352.5,513.5 L352.5,511.5 L351.5,510.5 L350.5,509.5 L349.5,509.5 M355.5,511.5 L356.5,510.5 L357.5,509.5 L357.5,517.5 M368.5,508.5 L362.5,520.5 M371.5,511.5 L371.5,511.5 L371.5,510.5 L372.5,510.5 L372.5,509.5 L374.5,509.5 L375.5,510.5 L375.5,510.5 L375.5,511.5 L375.5,511.5 L375.5,512.5 L374.5,513.5 L370.5,517.5 L376.5,517.5 M382.5,509.5 L378.5,514.5 L384.5,514.5 M382.5,509.5 L382.5,517.5 M392.5,511.5 L392.5,511.5 L393.5,510.5 L393.5,510.5 L394.5,509.5 L395.5,509.5 L396.5,510.5 L396.5,510.5 L397.5,511.5 L397.5,511.5 L396.5,512.5 L396.5,513.5 L392.5,517.5 L397.5,517.5 M402.5,509.5 L401.5,510.5 L400.5,511.5 L399.5,513.5 L399.5,514.5 L400.5,516.5 L401.5,517.5 L402.5,517.5 L402.5,517.5 L404.5,517.5 L404.5,516.5 L405.5,514.5 L405.5,513.5 L404.5,511.5 L404.5,510.5 L402.5,509.5 L402.5,509.5 M408.5,512.5 L407.5,512.5 L408.5,513.5 L408.5,512.5 L408.5,512.5 M408.5,516.5 L407.5,517.5 L408.5,517.5 L408.5,517.5 L408.5,516.5 M412.5,509.5 L416.5,509.5 L414.5,512.5 L415.5,512.5 L415.5,513.5 L416.5,513.5 L416.5,514.5 L416.5,515.5 L416.5,516.5 L415.5,517.5 L414.5,517.5 L413.5,517.5 L412.5,517.5 L411.5,516.5 L411.5,516.5 M421.5,509.5 L420.5,510.5 L419.5,511.5 L419.5,513.5 L419.5,514.5 L419.5,516.5 L420.5,517.5 L421.5,517.5 L422.5,517.5 L423.5,517.5 L424.5,516.5 L424.5,514.5 L424.5,513.5 L424.5,511.5 L423.5,510.5 L422.5,509.5 L421.5,509.5 M427.5,512.5 L427.5,512.5 L427.5,513.5 L427.5,512.5 L427.5,512.5 M427.5,516.5 L427.5,517.5 L427.5,517.5 L427.5,517.5 L427.5,516.5 M432.5,509.5 L431.5,510.5 L430.5,511.5 L430.5,513.5 L430.5,514.5 L430.5,516.5 L431.5,517.5 L432.5,517.5 L433.5,517.5 L434.5,517.5 L435.5,516.5 L435.5,514.5 L435.5,513.5 L435.5,511.5 L434.5,510.5 L433.5,509.5 L432.5,509.5 M440.5,509.5 L439.5,510.5 L438.5,511.5 L438.5,513.5 L438.5,514.5 L438.5,516.5 L439.5,517.5 L440.5,517.5 L441.5,517.5 L442.5,517.5 L443.5,516.5 L443.5,514.5 L443.5,513.5 L443.5,511.5 L442.5,510.5 L441.5,509.5 L440.5,509.5 M446.5,516.5 L446.5,517.5 L446.5,517.5 L446.5,517.5 L446.5,516.5 M451.5,509.5 L450.5,510.5 L450.5,511.5 L449.5,513.5 L449.5,514.5 L450.5,516.5 L450.5,517.5 L451.5,517.5 L452.5,517.5 L453.5,517.5 L454.5,516.5 L454.5,514.5 L454.5,513.5 L454.5,511.5 L453.5,510.5 L452.5,509.5 L451.5,509.5 M459.5,509.5 L458.5,510.5 L457.5,511.5 L457.5,513.5 L457.5,514.5 L457.5,516.5 L458.5,517.5 L459.5,517.5 L460.5,517.5 L461.5,517.5 L462.5,516.5 L462.5,514.5 L462.5,513.5 L462.5,511.5 L461.5,510.5 L460.5,509.5 L459.5,509.5 M467.5,509.5 L466.5,510.5 L465.5,511.5 L464.5,513.5 L464.5,514.5 L465.5,516.5 L466.5,517.5 L467.5,517.5 L467.5,517.5 L469.5,517.5 L469.5,516.5 L470.5,514.5 L470.5,513.5 L469.5,511.5 L469.5,510.5 L467.5,509.5 L467.5,509.5" stroke="#fff"/>
<path d="M20.5,53.5 L20.5,61.5 M18.5,53.5 L23.5,53.5 M25.5,53.5 L25.5,61.5 M25.5,53.5 L28.5,61.5 M31.5,53.5 L28.5,61.5 M31.5,53.5 L31.5,61.5 M45.5,54.5 L44.5,54.5 L43.5,53.5 L41.5,53.5 L40.5,54.5 L40.5,54.5 L40.5,55.5 L40.5,56.5 L40.5,56.5 L41.5,57.5 L43.5,57.5 L44.5,58.5 L44.5,58.5 L45.5,59.5 L45.5,60.5 L44.5,61.5 L43.5,61.5 L41.5,61.5 L40.5,61.5 L40.5,60.5 M47.5,53.5 L47.5,59.5 L48.5,60.5 L49.5,61.5 L50.5,61.5 L50.5,61.5 L52.5,61.5 L52.5,60.5 L53.5,59.5 L53.5,53.5 M56.5,53.5 L56.5,61.5 M56.5,53.5 L59.5,53.5 L60.5,54.5 L61.5,54.5 L61.5,55.5 L61.5,55.5 L61.5,56.5 L60.5,57.5 L59.5,57.5 M56.5,57.5 L59.5,57.5 L60.5,57.5 L61.5,58.5 L61.5,58.5 L61.5,60.5 L61.5,60.5 L60.5,61.5 L59.5,61.5 L56.5,61.5 M64.5,53.5 L64.5,61.5 M64.5,53.5 L67.5,61.5 M70.5,53.5 L67.5,61.5 M70.5,53.5 L70.5,61.5 M74.5,53.5 L74.5,54.5 L73.5,54.5 L73.5,55.5 L72.5,56.5 L72.5,58.5 L73.5,59.5 L73.5,60.5 L74.5,61.5 L74.5,61.5 L76.5,61.5 L77.5,61.5 L77.5,60.5 L78.5,59.5 L78.5,58.5 L78.5,56.5 L78.5,55.5 L77.5,54.5 L77.5,54.5 L76.5,53.5 L74.5,53.5 M81.5,53.5 L81.5,61.5 M81.5,53.5 L83.5,53.5 L85.5,54.5 L85.5,54.5 L86.5,55.5 L86.5,56.5 L86.5,58.5 L86.5,59.5 L85.5,60.5 L85.5,61.5 L83.5,61.5 L81.5,61.5 M89.5,53.5 L89.5,61.5 M89.5,53.5 L94.5,53.5 M89.5,57.5 L92.5,57.5 M89.5,61.5 L94.5,61.5" stroke="#fff"/>
<path d="M8.5,100.5 L8.5,108.5 M8.5,108.5 L13.5,108.5 M16.5,100.5 L13.5,108.5 M16.5,100.5 L19.5,108.5 M14.5,105.5 L18.5,105.5 M26.5,101.5 L25.5,101.5 L24.5,100.5 L23.5,100.5 L22.5,101.5 L21.5,101.5 L21.5,102.5 L21.5,103.5 L22.5,103.5 L22.5,104.5 L25.5,104.5 L25.5,105.5 L26.5,105.5 L26.5,106.5 L26.5,107.5 L25.5,108.5 L24.5,108.5 L23.5,108.5 L22.5,108.5 L21.5,107.5 M34.5,102.5 L34.5,101.5 L33.5,101.5 L32.5,100.5 L31.5,100.5 L30.5,101.5 L29.5,101.5 L29.5,102.5 L28.5,103.5 L28.5,105.5 L29.5,106.5 L29.5,107.5 L30.5,108.5 L31.5,108.5 L32.5,108.5 L33.5,108.5 L34.5,107.5 L34.5,106.5 M38.5,100.5 L38.5,101.5 L37.5,101.5 L37.5,102.5 L36.5,103.5 L36.5,105.5 L37.5,106.5 L37.5,107.5 L38.5,108.5 L38.5,108.5 L40.5,108.5 L41.5,108.5 L41.5,107.5 L42.5,106.5 L42.5,105.5 L42.5,103.5 L42.5,102.5 L41.5,101.5 L41.5,101.5 L40.5,100.5 L38.5,100.5 M51.5,99.5 L44.5,111.5 M53.5,100.5 L53.5,108.5 M53.5,100.5 L58.5,100.5 M53.5,104.5 L56.5,104.5 M53.5,108.5 L58.5,108.5 M60.5,100.5 L60.5,108.5 M65.5,100.5 L65.5,108.5 M62.5,100.5 L67.5,100.5 M78.5,99.5 L77.5,99.5 L76.5,101.5 L76.5,102.5 L75.5,104.5 L75.5,105.5 L76.5,107.5 L76.5,109.5 L77.5,110.5 L78.5,111.5 M82.5,100.5 L82.5,101.5 L81.5,101.5 L80.5,102.5 L80.5,103.5 L80.5,105.5 L80.5,106.5 L81.5,107.5 L82.5,108.5 L82.5,108.5 L84.5,108.5 L85.5,108.5 L85.5,107.5 L86.5,106.5 L86.5,105.5 L86.5,103.5 L86.5,102.5 L85.5,101.5 L85.5,101.5 L84.5,100.5 L82.5,100.5 M89.5,100.5 L89.5,108.5 M89.5,100.5 L92.5,100.5 L93.5,101.5 L94.5,101.5 L94.5,102.5 L94.5,103.5 L94.5,104.5 L93.5,104.5 L92.5,104.5 L89.5,104.5 M96.5,99.5 L97.5,99.5 L98.5,101.5 L98.5,102.5 L99.5,104.5 L99.5,105.5 L98.5,107.5 L98.5,109.5 L97.5,110.5 L96.5,111.5" stroke="#fff"/>
<path d="M104.5,39.5 L101.5,44.5 L106.5,44.5 M104.5,39.5 L104.5,47.5" stroke="#fff"/>
<path d="M101.5,48.5 L106.5,48.5 L103.5,51.5 L104.5,51.5 L105.5,52.5 L106.5,52.5 L106.5,53.5 L106.5,54.5 L106.5,55.5 L105.5,56.5 L104.5,56.5 L103.5,56.5 L101.5,56.5 L101.5,55.5 L101.5,55.5" stroke="#fff"/>
<path d="M101.5,60.5 L101.5,60.5 L101.5,59.5 L102.5,59.5 L103.5,58.5 L104.5,58.5 L105.5,59.5 L105.5,59.5 L106.5,60.5 L106.5,60.5 L105.5,61.5 L104.5,62.5 L101.5,66.5 L106.5,66.5" stroke="#fff"/>
<path d="M102.5,69.5 L103.5,68.5 L104.5,67.5 L104.5,75.5" stroke="#fff"/>
<path d="M51.5,133.5 L51.5,134.5 L50.5,134.5 L49.5,135.5 L49.5,136.5 L49.5,138.5 L49.5,139.5 L50.5,140.5 L51.5,141.5 L51.5,141.5 L53.5,141.5 L54.5,141.5 L54.5,140.5 L55.5,139.5 L55.5,138.5 L55.5,136.5 L55.5,135.5 L54.5,134.5 L54.5,134.5 L53.5,133.5 L51.5,133.5 M63.5,134.5 L62.5,134.5 L61.5,133.5 L59.5,133.5 L58.5,134.5 L58.5,134.5 L58.5,135.5 L58.5,136.5 L58.5,136.5 L59.5,137.5 L61.5,137.5 L62.5,138.5 L63.5,138.5 L63.5,139.5 L63.5,140.5 L62.5,141.5 L61.5,141.5 L59.5,141.5 L58.5,141.5 L58.5,140.5 M64.5,141.5 L70.5,141.5 M72.5,135.5 L72.5,135.5 L72.5,134.5 L73.5,134.5 L74.5,133.5 L75.5,133.5 L76.5,134.5 L76.5,134.5 L77.5,135.5 L77.5,135.5 L76.5,136.5 L75.5,137.5 L72.5,141.5 L77.5,141.5 M80.5,135.5 L80.5,135.5 L80.5,134.5 L81.5,134.5 L81.5,133.5 L83.5,133.5 L84.5,134.5 L84.5,134.5 L84.5,135.5 L84.5,135.5 L84.5,136.5 L83.5,137.5 L79.5,141.5 L85.5,141.5 M91.5,133.5 L87.5,138.5 L93.5,138.5 M91.5,133.5 L91.5,141.5 M100.5,133.5 L96.5,133.5 L95.5,137.5 L96.5,136.5 L97.5,136.5 L98.5,136.5 L99.5,136.5 L100.5,137.5 L100.5,138.5 L100.5,139.5 L100.5,140.5 L99.5,141.5 L98.5,141.5 L97.5,141.5 L96.5,141.5 L95.5,140.5 L95.5,140.5" stroke="#fff"/>
<path d="M51.5,144.5 L51.5,145.5 L50.5,145.5 L49.5,146.5 L49.5,147.5 L49.5,149.5 L49.5,150.5 L50.5,151.5 L51.5,152.5 L51.5,152.5 L53.5,152.5 L54.5,152.5 L54.5,151.5 L55.5,150.5 L55.5,149.5 L55.5,147.5 L55.5,146.5 L54.5,145.5 L54.5,145.5 L53.5,144.5 L51.5,144.5 M63.5,145.5 L62.5,145.5 L61.5,144.5 L59.5,144.5 L58.5,145.5 L58.5,145.5 L58.5,146.5 L58.5,147.5 L58.5,147.5 L59.5,148.5 L61.5,148.5 L62.5,149.5 L63.5,149.5 L63.5,150.5 L63.5,151.5 L62.5,152.5 L61.5,152.5 L59.5,152.5 L58.5,152.5 L58.5,151.5 M64.5,152.5 L70.5,152.5 M73.5,146.5 L74.5,145.5 L75.5,144.5 L75.5,152.5 M81.5,144.5 L80.5,145.5 L80.5,145.5 L80.5,146.5 L80.5,147.5 L81.5,147.5 L83.5,148.5 L84.5,148.5 L84.5,149.5 L85.5,149.5 L85.5,151.5 L84.5,151.5 L84.5,152.5 L83.5,152.5 L81.5,152.5 L80.5,152.5 L80.5,151.5 L79.5,151.5 L79.5,149.5 L80.5,149.5 L81.5,148.5 L82.5,148.5 L83.5,147.5 L84.5,147.5 L84.5,146.5 L84.5,145.5 L84.5,145.5 L83.5,144.5 L81.5,144.5 M92.5,147.5 L92.5,148.5 L91.5,149.5 L90.5,149.5 L90.5,149.5 L88.5,149.5 L88.5,148.5 L87.5,147.5 L87.5,146.5 L88.5,145.5 L88.5,145.5 L90.5,144.5 L90.5,144.5 L91.5,145.5 L92.5,145.5 L92.5,147.5 L92.5,149.5 L92.5,151.5 L91.5,152.5 L90.5,152.5 L89.5,152.5 L88.5,152.5 L88.5,151.5 M100.5,147.5 L100.5,148.5 L99.5,149.5 L98.5,149.5 L97.5,149.5 L96.5,149.5 L95.5,148.5 L95.5,147.5 L95.5,146.5 L95.5,145.5 L96.5,145.5 L97.5,144.5 L98.5,144.5 L99.5,145.5 L100.5,145.5 L100.5,147.5 L100.5,149.5 L100.5,151.5 L99.5,152.5 L98.5,152.5 L97.5,152.5 L96.5,152.5 L95.5,151.5" stroke="#fff"/>
<path d="M51.5,154.5 L51.5,155.5 L50.5,155.5 L49.5,156.5 L49.5,157.5 L49.5,159.5 L49.5,160.5 L50.5,161.5 L51.5,162.5 L51.5,162.5 L53.5,162.5 L54.5,162.5 L54.5,161.5 L55.5,160.5 L55.5,159.5 L55.5,157.5 L55.5,156.5 L54.5,155.5 L54.5,155.5 L53.5,154.5 L51.5,154.5 M63.5,155.5 L62.5,155.5 L61.5,154.5 L59.5,154.5 L58.5,155.5 L58.5,155.5 L58.5,156.5 L58.5,157.5 L58.5,157.5 L59.5,158.5 L61.5,158.5 L62.5,159.5 L63.5,159.5 L63.5,160.5 L63.5,161.5 L62.5,162.5 L61.5,162.5 L59.5,162.5 L58.5,162.5 L58.5,161.5 M64.5,162.5 L70.5,162.5 M72.5,156.5 L72.5,156.5 L72.5,155.5 L73.5,155.5 L74.5,154.5 L75.5,154.5 L76.5,155.5 L76.5,155.5 L77.5,156.5 L77.5,156.5 L76.5,157.5 L75.5,158.5 L72.5,162.5 L77.5,162.5 M80.5,156.5 L80.5,156.5 L80.5,155.5 L81.5,155.5 L81.5,154.5 L83.5,154.5 L84.5,155.5 L84.5,155.5 L84.5,156.5 L84.5,156.5 L84.5,157.5 L83.5,158.5 L79.5,162.5 L85.5,162.5 M88.5,156.5 L88.5,156.5 L88.5,155.5 L88.5,155.5 L89.5,154.5 L91.5,154.5 L91.5,155.5 L92.5,155.5 L92.5,156.5 L92.5,156.5 L92.5,157.5 L91.5,158.5 L87.5,162.5 L93.5,162.5 M97.5,154.5 L96.5,155.5 L95.5,155.5 L95.5,156.5 L96.5,157.5 L97.5,157.5 L98.5,158.5 L99.5,158.5 L100.5,159.5 L100.5,159.5 L100.5,161.5 L100.5,161.5 L100.5,162.5 L98.5,162.5 L97.5,162.5 L96.5,162.5 L95.5,161.5 L95.5,161.5 L95.5,159.5 L95.5,159.5 L96.5,158.5 L97.5,158.5 L99.5,157.5 L100.5,157.5 L100.5,156.5 L100.5,155.5 L100.5,155.5 L98.5,154.5 L97.5,154.5" stroke="#fff"/>
<path d="M51.5,165.5 L51.5,166.5 L50.5,166.5 L49.5,167.5 L49.5,168.5 L49.5,170.5 L49.5,171.5 L50.5,172.5 L51.5,173.5 L51.5,173.5 L53.5,173.5 L54.5,173.5 L54.5,172.5 L55.5,171.5 L55.5,170.5 L55.5,168.5 L55.5,167.5 L54.5,166.5 L54.5,166.5 L53.5,165.5 L51.5,165.5 M63.5,166.5 L62.5,166.5 L61.5,165.5 L59.5,165.5 L58.5,166.5 L58.5,166.5 L58.5,167.5 L58.5,168.5 L58.5,168.5 L59.5,169.5 L61.5,169.5 L62.5,170.5 L63.5,170.5 L63.5,171.5 L63.5,172.5 L62.5,173.5 L61.5,173.5 L59.5,173.5 L58.5,173.5 L58.5,172.5 M64.5,173.5 L70.5,173.5 M72.5,167.5 L72.5,167.5 L72.5,166.5 L73.5,166.5 L74.5,165.5 L75.5,165.5 L76.5,166.5 L76.5,166.5 L77.5,167.5 L77.5,167.5 L76.5,168.5 L75.5,169.5 L72.5,173.5 L77.5,173.5 M80.5,167.5 L80.5,167.5 L80.5,166.5 L81.5,166.5 L81.5,165.5 L83.5,165.5 L84.5,166.5 L84.5,166.5 L84.5,167.5 L84.5,167.5 L84.5,168.5 L83.5,169.5 L79.5,173.5 L85.5,173.5 M88.5,165.5 L92.5,165.5 L90.5,168.5 L91.5,168.5 L92.5,169.5 L92.5,169.5 L93.5,170.5 L93.5,171.5 L92.5,172.5 L91.5,173.5 L90.5,173.5 L89.5,173.5 L88.5,173.5 L88.5,172.5 L87.5,172.5 M100.5,166.5 L100.5,166.5 L98.5,165.5 L98.5,165.5 L97.5,166.5 L96.5,167.5 L95.5,169.5 L95.5,170.5 L96.5,172.5 L97.5,173.5 L98.5,173.5 L98.5,173.5 L99.5,173.5 L100.5,172.5 L100.5,171.5 L100.5,170.5 L100.5,169.5 L99.5,169.5 L98.5,168.5 L98.5,168.5 L97.5,169.5 L96.5,169.5 L95.5,170.5" stroke="#fff"/>
<path d="M51.5,175.5 L51.5,176.5 L50.5,176.5 L49.5,177.5 L49.5,178.5 L49.5,180.5 L49.5,181.5 L50.5,182.5 L51.5,183.5 L51.5,183.5 L53.5,183.5 L54.5,183.5 L54.5,182.5 L55.5,181.5 L55.5,180.5 L55.5,178.5 L55.5,177.5 L54.5,176.5 L54.5,176.5 L53.5,175.5 L51.5,175.5 M63.5,176.5 L62.5,176.5 L61.5,175.5 L59.5,175.5 L58.5,176.5 L58.5,176.5 L58.5,177.5 L58.5,178.5 L58.5,178.5 L59.5,179.5 L61.5,179.5 L62.5,180.5 L63.5,180.5 L63.5,181.5 L63.5,182.5 L62.5,183.5 L61.5,183.5 L59.5,183.5 L58.5,183.5 L58.5,182.5 M64.5,183.5 L70.5,183.5 M72.5,177.5 L72.5,177.5 L72.5,176.5 L73.5,176.5 L74.5,175.5 L75.5,175.5 L76.5,176.5 L76.5,176.5 L77.5,177.5 L77.5,177.5 L76.5,178.5 L75.5,179.5 L72.5,183.5 L77.5,183.5 M80.5,177.5 L80.5,177.5 L80.5,176.5 L81.5,176.5 L81.5,175.5 L83.5,175.5 L84.5,176.5 L84.5,176.5 L84.5,177.5 L84.5,177.5 L84.5,178.5 L83.5,179.5 L79.5,183.5 L85.5,183.5 M88.5,175.5 L92.5,175.5 L90.5,178.5 L91.5,178.5 L92.5,179.5 L92.5,179.5 L93.5,180.5 L93.5,181.5 L92.5,182.5 L91.5,183.5 L90.5,183.5 L89.5,183.5 L88.5,183.5 L88.5,182.5 L87.5,182.5 M99.5,175.5 L95.5,180.5 L101.5,180.5 M99.5,175.5 L99.5,183.5" stroke="#fff"/>
<path d="M51.5,185.5 L51.5,186.5 L50.5,186.5 L49.5,187.5 L49.5,188.5 L49.5,190.5 L49.5,191.5 L50.5,192.5 L51.5,193.5 L51.5,193.5 L53.5,193.5 L54.5,193.5 L54.5,192.5 L55.5,191.5 L55.5,190.5 L55.5,188.5 L55.5,187.5 L54.5,186.5 L54.5,186.5 L53.5,185.5 L51.5,185.5 M63.5,186.5 L62.5,186.5 L61.5,185.5 L59.5,185.5 L58.5,186.5 L58.5,186.5 L58.5,187.5 L58.5,188.5 L58.5,188.5 L59.5,189.5 L61.5,189.5 L62.5,190.5 L63.5,190.5 L63.5,191.5 L63.5,192.5 L62.5,193.5 L61.5,193.5 L59.5,193.5 L58.5,193.5 L58.5,192.5 M64.5,193.5 L70.5,193.5 M72.5,187.5 L72.5,187.5 L72.5,186.5 L73.5,186.5 L74.5,185.5 L75.5,185.5 L76.5,186.5 L76.5,186.5 L77.5,187.5 L77.5,187.5 L76.5,188.5 L75.5,189.5 L72.5,193.5 L77.5,193.5 M80.5,187.5 L80.5,187.5 L80.5,186.5 L81.5,186.5 L81.5,185.5 L83.5,185.5 L84.5,186.5 L84.5,186.5 L84.5,187.5 L84.5,187.5 L84.5,188.5 L83.5,189.5 L79.5,193.5 L85.5,193.5 M88.5,185.5 L92.5,185.5 L90.5,188.5 L91.5,188.5 L92.5,189.5 L92.5,189.5 L93.5,190.5 L93.5,191.5 L92.5,192.5 L91.5,193.5 L90.5,193.5 L89.5,193.5 L88.5,193.5 L88.5,192.5 L87.5,192.5 M100.5,185.5 L96.5,185.5 L95.5,189.5 L96.5,188.5 L97.5,188.5 L98.5,188.5 L99.5,188.5 L100.5,189.5 L100.5,190.5 L100.5,191.5 L100.5,192.5 L99.5,193.5 L98.5,193.5 L97.5,193.5 L96.5,193.5 L95.5,192.5 L95.5,192.5" stroke="#fff"/>
<path d="M51.5,196.5 L51.5,197.5 L50.5,197.5 L49.5,198.5 L49.5,199.5 L49.5,201.5 L49.5,202.5 L50.5,203.5 L51.5,204.5 L51.5,204.5 L53.5,204.5 L54.5,204.5 L54.5,203.5 L55.5,202.5 L55.5,201.5 L55.5,199.5 L55.5,198.5 L54.5,197.5 L54.5,197.5 L53.5,196.5 L51.5,196.5 M63.5,197.5 L62.5,197.5 L61.5,196.5 L59.5,196.5 L58.5,197.5 L58.5,197.5 L58.5,198.5 L58.5,199.5 L58.5,199.5 L59.5,200.5 L61.5,200.5 L62.5,201.5 L63.5,201.5 L63.5,202.5 L63.5,203.5 L62.5,204.5 L61.5,204.5 L59.5,204.5 L58.5,204.5 L58.5,203.5 M64.5,204.5 L70.5,204.5 M72.5,198.5 L72.5,198.5 L72.5,197.5 L73.5,197.5 L74.5,196.5 L75.5,196.5 L76.5,197.5 L76.5,197.5 L77.5,198.5 L77.5,198.5 L76.5,199.5 L75.5,200.5 L72.5,204.5 L77.5,204.5 M80.5,198.5 L80.5,198.5 L80.5,197.5 L81.5,197.5 L81.5,196.5 L83.5,196.5 L84.5,197.5 L84.5,197.5 L84.5,198.5 L84.5,198.5 L84.5,199.5 L83.5,200.5 L79.5,204.5 L85.5,204.5 M91.5,196.5 L87.5,201.5 L93.5,201.5 M91.5,196.5 L91.5,204.5 M100.5,197.5 L100.5,197.5 L98.5,196.5 L98.5,196.5 L97.5,197.5 L96.5,198.5 L95.5,200.5 L95.5,201.5 L96.5,203.5 L97.5,204.5 L98.5,204.5 L98.5,204.5 L99.5,204.5 L100.5,203.5 L100.5,202.5 L100.5,201.5 L100.5,200.5 L99.5,200.5 L98.5,199.5 L98.5,199.5 L97.5,200.5 L96.5,200.5 L95.5,201.5" stroke="#fff"/>
<path d="M51.5,206.5 L51.5,207.5 L50.5,207.5 L49.5,208.5 L49.5,209.5 L49.5,211.5 L49.5,212.5 L50.5,213.5 L51.5,214.5 L51.5,214.5 L53.5,214.5 L54.5,214.5 L54.5,213.5 L55.5,212.5 L55.5,211.5 L55.5,209.5 L55.5,208.5 L54.5,207.5 L54.5,207.5 L53.5,206.5 L51.5,206.5 M63.5,207.5 L62.5,207.5 L61.5,206.5 L59.5,206.5 L58.5,207.5 L58.5,207.5 L58.5,208.5 L58.5,209.5 L58.5,209.5 L59.5,210.5 L61.5,210.5 L62.5,211.5 L63.5,211.5 L63.5,212.5 L63.5,213.5 L62.5,214.5 L61.5,214.5 L59.5,214.5 L58.5,214.5 L58.5,213.5 M64.5,214.5 L70.5,214.5 M73.5,208.5 L74.5,207.5 L75.5,206.5 L75.5,214.5 M85.5,206.5 L81.5,214.5 M79.5,206.5 L85.5,206.5 M92.5,207.5 L92.5,207.5 L91.5,206.5 L90.5,206.5 L89.5,207.5 L88.5,208.5 L88.5,210.5 L88.5,211.5 L88.5,213.5 L89.5,214.5 L90.5,214.5 L90.5,214.5 L91.5,214.5 L92.5,213.5 L93.5,212.5 L93.5,211.5 L92.5,210.5 L91.5,210.5 L90.5,209.5 L90.5,209.5 L89.5,210.5 L88.5,210.5 L88.5,211.5 M95.5,208.5 L95.5,208.5 L96.5,207.5 L96.5,207.5 L97.5,206.5 L98.5,206.5 L99.5,207.5 L100.5,207.5 L100.5,208.5 L100.5,208.5 L100.5,209.5 L99.5,210.5 L95.5,214.5 L100.5,214.5" stroke="#fff"/>
<path d="M51.5,217.5 L51.5,218.5 L50.5,218.5 L49.5,219.5 L49.5,220.5 L49.5,222.5 L49.5,223.5 L50.5,224.5 L51.5,225.5 L51.5,225.5 L53.5,225.5 L54.5,225.5 L54.5,224.5 L55.5,223.5 L55.5,222.5 L55.5,220.5 L55.5,219.5 L54.5,218.5 L54.5,218.5 L53.5,217.5 L51.5,217.5 M63.5,218.5 L62.5,218.5 L61.5,217.5 L59.5,217.5 L58.5,218.5 L58.5,218.5 L58.5,219.5 L58.5,220.5 L58.5,220.5 L59.5,221.5 L61.5,221.5 L62.5,222.5 L63.5,222.5 L63.5,223.5 L63.5,224.5 L62.5,225.5 L61.5,225.5 L59.5,225.5 L58.5,225.5 L58.5,224.5 M64.5,225.5 L70.5,225.5 M73.5,219.5 L74.5,218.5 L75.5,217.5 L75.5,225.5 M85.5,217.5 L81.5,225.5 M79.5,217.5 L85.5,217.5 M90.5,217.5 L88.5,218.5 L88.5,219.5 L87.5,221.5 L87.5,222.5 L88.5,224.5 L88.5,225.5 L90.5,225.5 L90.5,225.5 L91.5,225.5 L92.5,224.5 L93.5,222.5 L93.5,221.5 L92.5,219.5 L91.5,218.5 L90.5,217.5 L90.5,217.5 M100.5,217.5 L96.5,217.5 L95.5,221.5 L96.5,220.5 L97.5,220.5 L98.5,220.5 L99.5,220.5 L100.5,221.5 L100.5,222.5 L100.5,223.5 L100.5,224.5 L99.5,225.5 L98.5,225.5 L97.5,225.5 L96.5,225.5 L95.5,224.5 L95.5,224.5" stroke="#fff"/>
<path d="M51.5,227.5 L51.5,228.5 L50.5,228.5 L49.5,229.5 L49.5,230.5 L49.5,232.5 L49.5,233.5 L50.5,234.5 L51.5,235.5 L51.5,235.5 L53.5,235.5 L54.5,235.5 L54.5,234.5 L55.5,233.5 L55.5,232.5 L55.5,230.5 L55.5,229.5 L54.5,228.5 L54.5,228.5 L53.5,227.5 L51.5,227.5 M63.5,228.5 L62.5,228.5 L61.5,227.5 L59.5,227.5 L58.5,228.5 L58.5,228.5 L58.5,229.5 L58.5,230.5 L58.5,230.5 L59.5,231.5 L61.5,231.5 L62.5,232.5 L63.5,232.5 L63.5,233.5 L63.5,234.5 L62.5,235.5 L61.5,235.5 L59.5,235.5 L58.5,235.5 L58.5,234.5 M64.5,235.5 L70.5,235.5 M73.5,229.5 L74.5,228.5 L75.5,227.5 L75.5,235.5 M85.5,227.5 L81.5,235.5 M79.5,227.5 L85.5,227.5 M90.5,227.5 L88.5,228.5 L88.5,229.5 L87.5,231.5 L87.5,232.5 L88.5,234.5 L88.5,235.5 L90.5,235.5 L90.5,235.5 L91.5,235.5 L92.5,234.5 L93.5,232.5 L93.5,231.5 L92.5,229.5 L91.5,228.5 L90.5,227.5 L90.5,227.5 M99.5,227.5 L95.5,232.5 L101.5,232.5 M99.5,227.5 L99.5,235.5" stroke="#fff"/>
<path d="M51.5,237.5 L51.5,238.5 L50.5,238.5 L49.5,239.5 L49.5,240.5 L49.5,242.5 L49.5,243.5 L50.5,244.5 L51.5,245.5 L51.5,245.5 L53.5,245.5 L54.5,245.5 L54.5,244.5 L55.5,243.5 L55.5,242.5 L55.5,240.5 L55.5,239.5 L54.5,238.5 L54.5,238.5 L53.5,237.5 L51.5,237.5 M63.5,238.5 L62.5,238.5 L61.5,237.5 L59.5,237.5 L58.5,238.5 L58.5,238.5 L58.5,239.5 L58.5,240.5 L58.5,240.5 L59.5,241.5 L61.5,241.5 L62.5,242.5 L63.5,242.5 L63.5,243.5 L63.5,244.5 L62.5,245.5 L61.5,245.5 L59.5,245.5 L58.5,245.5 L58.5,244.5 M64.5,245.5 L70.5,245.5 M73.5,239.5 L74.5,238.5 L75.5,237.5 L75.5,245.5 M85.5,237.5 L81.5,245.5 M79.5,237.5 L85.5,237.5 M90.5,237.5 L88.5,238.5 L88.5,239.5 L87.5,241.5 L87.5,242.5 L88.5,244.5 L88.5,245.5 L90.5,245.5 L90.5,245.5 L91.5,245.5 L92.5,244.5 L93.5,242.5 L93.5,241.5 L92.5,239.5 L91.5,238.5 L90.5,237.5 L90.5,237.5 M96.5,237.5 L100.5,237.5 L98.5,240.5 L99.5,240.5 L100.5,241.5 L100.5,241.5 L100.5,242.5 L100.5,243.5 L100.5,244.5 L99.5,245.5 L98.5,245.5 L97.5,245.5 L96.5,245.5 L95.5,244.5 L95.5,244.5" stroke="#fff"/>
<path d="M51.5,248.5 L51.5,249.5 L50.5,249.5 L49.5,250.5 L49.5,251.5 L49.5,253.5 L49.5,254.5 L50.5,255.5 L51.5,256.5 L51.5,256.5 L53.5,256.5 L54.5,256.5 L54.5,255.5 L55.5,254.5 L55.5,253.5 L55.5,251.5 L55.5,250.5 L54.5,249.5 L54.5,249.5 L53.5,248.5 L51.5,248.5 M63.5,249.5 L62.5,249.5 L61.5,248.5 L59.5,248.5 L58.5,249.5 L58.5,249.5 L58.5,250.5 L58.5,251.5 L58.5,251.5 L59.5,252.5 L61.5,252.5 L62.5,253.5 L63.5,253.5 L63.5,254.5 L63.5,255.5 L62.5,256.5 L61.5,256.5 L59.5,256.5 L58.5,256.5 L58.5,255.5 M64.5,256.5 L70.5,256.5 M72.5,250.5 L72.5,250.5 L72.5,249.5 L73.5,249.5 L74.5,248.5 L75.5,248.5 L76.5,249.5 L76.5,249.5 L77.5,250.5 L77.5,250.5 L76.5,251.5 L75.5,252.5 L72.5,256.5 L77.5,256.5 M82.5,248.5 L81.5,249.5 L80.5,250.5 L79.5,252.5 L79.5,253.5 L80.5,255.5 L81.5,256.5 L82.5,256.5 L83.5,256.5 L84.5,256.5 L84.5,255.5 L85.5,253.5 L85.5,252.5 L84.5,250.5 L84.5,249.5 L83.5,248.5 L82.5,248.5 M92.5,251.5 L92.5,252.5 L91.5,253.5 L90.5,253.5 L90.5,253.5 L88.5,253.5 L88.5,252.5 L87.5,251.5 L87.5,250.5 L88.5,249.5 L88.5,249.5 L90.5,248.5 L90.5,248.5 L91.5,249.5 L92.5,249.5 L92.5,251.5 L92.5,253.5 L92.5,255.5 L91.5,256.5 L90.5,256.5 L89.5,256.5 L88.5,256.5 L88.5,255.5 M100.5,248.5 L97.5,256.5 M95.5,248.5 L100.5,248.5" stroke="#fff"/>
<path d="M51.5,258.5 L51.5,259.5 L50.5,259.5 L49.5,260.5 L49.5,261.5 L49.5,263.5 L49.5,264.5 L50.5,265.5 L51.5,266.5 L51.5,266.5 L53.5,266.5 L54.5,266.5 L54.5,265.5 L55.5,264.5 L55.5,263.5 L55.5,261.5 L55.5,260.5 L54.5,259.5 L54.5,259.5 L53.5,258.5 L51.5,258.5 M63.5,259.5 L62.5,259.5 L61.5,258.5 L59.5,258.5 L58.5,259.5 L58.5,259.5 L58.5,260.5 L58.5,261.5 L58.5,261.5 L59.5,262.5 L61.5,262.5 L62.5,263.5 L63.5,263.5 L63.5,264.5 L63.5,265.5 L62.5,266.5 L61.5,266.5 L59.5,266.5 L58.5,266.5 L58.5,265.5 M64.5,266.5 L70.5,266.5 M72.5,260.5 L72.5,260.5 L72.5,259.5 L73.5,259.5 L74.5,258.5 L75.5,258.5 L76.5,259.5 L76.5,259.5 L77.5,260.5 L77.5,260.5 L76.5,261.5 L75.5,262.5 L72.5,266.5 L77.5,266.5 M82.5,258.5 L81.5,259.5 L80.5,260.5 L79.5,262.5 L79.5,263.5 L80.5,265.5 L81.5,266.5 L82.5,266.5 L83.5,266.5 L84.5,266.5 L84.5,265.5 L85.5,263.5 L85.5,262.5 L84.5,260.5 L84.5,259.5 L83.5,258.5 L82.5,258.5 M92.5,259.5 L92.5,259.5 L91.5,258.5 L90.5,258.5 L89.5,259.5 L88.5,260.5 L88.5,262.5 L88.5,263.5 L88.5,265.5 L89.5,266.5 L90.5,266.5 L90.5,266.5 L91.5,266.5 L92.5,265.5 L93.5,264.5 L93.5,263.5 L92.5,262.5 L91.5,262.5 L90.5,261.5 L90.5,261.5 L89.5,262.5 L88.5,262.5 L88.5,263.5 M96.5,258.5 L100.5,258.5 L98.5,261.5 L99.5,261.5 L100.5,262.5 L100.5,262.5 L100.5,263.5 L100.5,264.5 L100.5,265.5 L99.5,266.5 L98.5,266.5 L97.5,266.5 L96.5,266.5 L95.5,265.5 L95.5,265.5" stroke="#fff"/>
<path d="M51.5,269.5 L51.5,270.5 L50.5,270.5 L49.5,271.5 L49.5,272.5 L49.5,274.5 L49.5,275.5 L50.5,276.5 L51.5,277.5 L51.5,277.5 L53.5,277.5 L54.5,277.5 L54.5,276.5 L55.5,275.5 L55.5,274.5 L55.5,272.5 L55.5,271.5 L54.5,270.5 L54.5,270.5 L53.5,269.5 L51.5,269.5 M63.5,270.5 L62.5,270.5 L61.5,269.5 L59.5,269.5 L58.5,270.5 L58.5,270.5 L58.5,271.5 L58.5,272.5 L58.5,272.5 L59.5,273.5 L61.5,273.5 L62.5,274.5 L63.5,274.5 L63.5,275.5 L63.5,276.5 L62.5,277.5 L61.5,277.5 L59.5,277.5 L58.5,277.5 L58.5,276.5 M64.5,277.5 L70.5,277.5 M72.5,271.5 L72.5,271.5 L72.5,270.5 L73.5,270.5 L74.5,269.5 L75.5,269.5 L76.5,270.5 L76.5,270.5 L77.5,271.5 L77.5,271.5 L76.5,272.5 L75.5,273.5 L72.5,277.5 L77.5,277.5 M82.5,269.5 L81.5,270.5 L80.5,271.5 L79.5,273.5 L79.5,274.5 L80.5,276.5 L81.5,277.5 L82.5,277.5 L83.5,277.5 L84.5,277.5 L84.5,276.5 L85.5,274.5 L85.5,273.5 L84.5,271.5 L84.5,270.5 L83.5,269.5 L82.5,269.5 M92.5,269.5 L88.5,269.5 L88.5,273.5 L88.5,272.5 L89.5,272.5 L90.5,272.5 L91.5,272.5 L92.5,273.5 L93.5,274.5 L93.5,275.5 L92.5,276.5 L91.5,277.5 L90.5,277.5 L89.5,277.5 L88.5,277.5 L88.5,276.5 L87.5,276.5 M97.5,269.5 L96.5,270.5 L95.5,270.5 L95.5,271.5 L96.5,272.5 L97.5,272.5 L98.5,273.5 L99.5,273.5 L100.5,274.5 L100.5,274.5 L100.5,276.5 L100.5,276.5 L100.5,277.5 L98.5,277.5 L97.5,277.5 L96.5,277.5 L95.5,276.5 L95.5,276.5 L95.5,274.5 L95.5,274.5 L96.5,273.5 L97.5,273.5 L99.5,272.5 L100.5,272.5 L100.5,271.5 L100.5,270.5 L100.5,270.5 L98.5,269.5 L97.5,269.5" stroke="#fff"/>
<path d="M51.5,279.5 L51.5,280.5 L50.5,280.5 L49.5,281.5 L49.5,282.5 L49.5,284.5 L49.5,285.5 L50.5,286.5 L51.5,287.5 L51.5,287.5 L53.5,287.5 L54.5,287.5 L54.5,286.5 L55.5,285.5 L55.5,284.5 L55.5,282.5 L55.5,281.5 L54.5,280.5 L54.5,280.5 L53.5,279.5 L51.5,279.5 M63.5,280.5 L62.5,280.5 L61.5,279.5 L59.5,279.5 L58.5,280.5 L58.5,280.5 L58.5,281.5 L58.5,282.5 L58.5,282.5 L59.5,283.5 L61.5,283.5 L62.5,284.5 L63.5,284.5 L63.5,285.5 L63.5,286.5 L62.5,287.5 L61.5,287.5 L59.5,287.5 L58.5,287.5 L58.5,286.5 M64.5,287.5 L70.5,287.5 M72.5,281.5 L72.5,281.5 L72.5,280.5 L73.5,280.5 L74.5,279.5 L75.5,279.5 L76.5,280.5 L76.5,280.5 L77.5,281.5 L77.5,281.5 L76.5,282.5 L75.5,283.5 L72.5,287.5 L77.5,287.5 M82.5,279.5 L81.5,280.5 L80.5,281.5 L79.5,283.5 L79.5,284.5 L80.5,286.5 L81.5,287.5 L82.5,287.5 L83.5,287.5 L84.5,287.5 L84.5,286.5 L85.5,284.5 L85.5,283.5 L84.5,281.5 L84.5,280.5 L83.5,279.5 L82.5,279.5 M91.5,279.5 L87.5,284.5 L93.5,284.5 M91.5,279.5 L91.5,287.5 M97.5,279.5 L96.5,280.5 L95.5,280.5 L95.5,281.5 L96.5,282.5 L97.5,282.5 L98.5,283.5 L99.5,283.5 L100.5,284.5 L100.5,284.5 L100.5,286.5 L100.5,286.5 L100.5,287.5 L98.5,287.5 L97.5,287.5 L96.5,287.5 L95.5,286.5 L95.5,286.5 L95.5,284.5 L95.5,284.5 L96.5,283.5 L97.5,283.5 L99.5,282.5 L100.5,282.5 L100.5,281.5 L100.5,280.5 L100.5,280.5 L98.5,279.5 L97.5,279.5" stroke="#fff"/>
<path d="M51.5,289.5 L51.5,290.5 L50.5,290.5 L49.5,291.5 L49.5,292.5 L49.5,294.5 L49.5,295.5 L50.5,296.5 L51.5,297.5 L51.5,297.5 L53.5,297.5 L54.5,297.5 L54.5,296.5 L55.5,295.5 L55.5,294.5 L55.5,292.5 L55.5,291.5 L54.5,290.5 L54.5,290.5 L53.5,289.5 L51.5,289.5 M63.5,290.5 L62.5,290.5 L61.5,289.5 L59.5,289.5 L58.5,290.5 L58.5,290.5 L58.5,291.5 L58.5,292.5 L58.5,292.5 L59.5,293.5 L61.5,293.5 L62.5,294.5 L63.5,294.5 L63.5,295.5 L63.5,296.5 L62.5,297.5 L61.5,297.5 L59.5,297.5 L58.5,297.5 L58.5,296.5 M64.5,297.5 L70.5,297.5 M72.5,291.5 L72.5,291.5 L72.5,290.5 L73.5,290.5 L74.5,289.5 L75.5,289.5 L76.5,290.5 L76.5,290.5 L77.5,291.5 L77.5,291.5 L76.5,292.5 L75.5,293.5 L72.5,297.5 L77.5,297.5 M82.5,289.5 L81.5,290.5 L80.5,291.5 L79.5,293.5 L79.5,294.5 L80.5,296.5 L81.5,297.5 L82.5,297.5 L83.5,297.5 L84.5,297.5 L84.5,296.5 L85.5,294.5 L85.5,293.5 L84.5,291.5 L84.5,290.5 L83.5,289.5 L82.5,289.5 M92.5,289.5 L88.5,289.5 L88.5,293.5 L88.5,292.5 L89.5,292.5 L90.5,292.5 L91.5,292.5 L92.5,293.5 L93.5,294.5 L93.5,295.5 L92.5,296.5 L91.5,297.5 L90.5,297.5 L89.5,297.5 L88.5,297.5 L88.5,296.5 L87.5,296.5 M100.5,292.5 L100.5,293.5 L99.5,294.5 L98.5,294.5 L97.5,294.5 L96.5,294.5 L95.5,293.5 L95.5,292.5 L95.5,291.5 L95.5,290.5 L96.5,290.5 L97.5,289.5 L98.5,289.5 L99.5,290.5 L100.5,290.5 L100.5,292.5 L100.5,294.5 L100.5,296.5 L99.5,297.5 L98.5,297.5 L97.5,297.5 L96.5,297.5 L95.5,296.5" stroke="#fff"/>
<path d="M51.5,300.5 L51.5,301.5 L50.5,301.5 L49.5,302.5 L49.5,303.5 L49.5,305.5 L49.5,306.5 L50.5,307.5 L51.5,308.5 L51.5,308.5 L53.5,308.5 L54.5,308.5 L54.5,307.5 L55.5,306.5 L55.5,305.5 L55.5,303.5 L55.5,302.5 L54.5,301.5 L54.5,301.5 L53.5,300.5 L51.5,300.5 M63.5,301.5 L62.5,301.5 L61.5,300.5 L59.5,300.5 L58.5,301.5 L58.5,301.5 L58.5,302.5 L58.5,303.5 L58.5,303.5 L59.5,304.5 L61.5,304.5 L62.5,305.5 L63.5,305.5 L63.5,306.5 L63.5,307.5 L62.5,308.5 L61.5,308.5 L59.5,308.5 L58.5,308.5 L58.5,307.5 M64.5,308.5 L70.5,308.5 M72.5,302.5 L72.5,302.5 L72.5,301.5 L73.5,301.5 L74.5,300.5 L75.5,300.5 L76.5,301.5 L76.5,301.5 L77.5,302.5 L77.5,302.5 L76.5,303.5 L75.5,304.5 L72.5,308.5 L77.5,308.5 M81.5,302.5 L81.5,301.5 L83.5,300.5 L83.5,308.5 M93.5,300.5 L89.5,308.5 M87.5,300.5 L93.5,300.5 M97.5,300.5 L96.5,301.5 L95.5,302.5 L95.5,304.5 L95.5,305.5 L95.5,307.5 L96.5,308.5 L97.5,308.5 L98.5,308.5 L99.5,308.5 L100.5,307.5 L100.5,305.5 L100.5,304.5 L100.5,302.5 L99.5,301.5 L98.5,300.5 L97.5,300.5" stroke="#fff"/>
<path d="M51.5,310.5 L51.5,311.5 L50.5,311.5 L49.5,312.5 L49.5,313.5 L49.5,315.5 L49.5,316.5 L50.5,317.5 L51.5,318.5 L51.5,318.5 L53.5,318.5 L54.5,318.5 L54.5,317.5 L55.5,316.5 L55.5,315.5 L55.5,313.5 L55.5,312.5 L54.5,311.5 L54.5,311.5 L53.5,310.5 L51.5,310.5 M63.5,311.5 L62.5,311.5 L61.5,310.5 L59.5,310.5 L58.5,311.5 L58.5,311.5 L58.5,312.5 L58.5,313.5 L58.5,313.5 L59.5,314.5 L61.5,314.5 L62.5,315.5 L63.5,315.5 L63.5,316.5 L63.5,317.5 L62.5,318.5 L61.5,318.5 L59.5,318.5 L58.5,318.5 L58.5,317.5 M64.5,318.5 L70.5,318.5 M72.5,312.5 L72.5,312.5 L72.5,311.5 L73.5,311.5 L74.5,310.5 L75.5,310.5 L76.5,311.5 L76.5,311.5 L77.5,312.5 L77.5,312.5 L76.5,313.5 L75.5,314.5 L72.5,318.5 L77.5,318.5 M81.5,312.5 L81.5,311.5 L83.5,310.5 L83.5,318.5 M92.5,311.5 L92.5,311.5 L91.5,310.5 L90.5,310.5 L89.5,311.5 L88.5,312.5 L88.5,314.5 L88.5,315.5 L88.5,317.5 L89.5,318.5 L90.5,318.5 L90.5,318.5 L91.5,318.5 L92.5,317.5 L93.5,316.5 L93.5,315.5 L92.5,314.5 L91.5,314.5 L90.5,313.5 L90.5,313.5 L89.5,314.5 L88.5,314.5 L88.5,315.5 M100.5,313.5 L100.5,314.5 L99.5,315.5 L98.5,315.5 L97.5,315.5 L96.5,315.5 L95.5,314.5 L95.5,313.5 L95.5,312.5 L95.5,311.5 L96.5,311.5 L97.5,310.5 L98.5,310.5 L99.5,311.5 L100.5,311.5 L100.5,313.5 L100.5,315.5 L100.5,317.5 L99.5,318.5 L98.5,318.5 L97.5,318.5 L96.5,318.5 L95.5,317.5" stroke="#fff"/>
<path d="M51.5,321.5 L51.5,322.5 L50.5,322.5 L49.5,323.5 L49.5,324.5 L49.5,326.5 L49.5,327.5 L50.5,328.5 L51.5,329.5 L51.5,329.5 L53.5,329.5 L54.5,329.5 L54.5,328.5 L55.5,327.5 L55.5,326.5 L55.5,324.5 L55.5,323.5 L54.5,322.5 L54.5,322.5 L53.5,321.5 L51.5,321.5 M63.5,322.5 L62.5,322.5 L61.5,321.5 L59.5,321.5 L58.5,322.5 L58.5,322.5 L58.5,323.5 L58.5,324.5 L58.5,324.5 L59.5,325.5 L61.5,325.5 L62.5,326.5 L63.5,326.5 L63.5,327.5 L63.5,328.5 L62.5,329.5 L61.5,329.5 L59.5,329.5 L58.5,329.5 L58.5,328.5 M64.5,329.5 L70.5,329.5 M72.5,323.5 L72.5,323.5 L72.5,322.5 L73.5,322.5 L74.5,321.5 L75.5,321.5 L76.5,322.5 L76.5,322.5 L77.5,323.5 L77.5,323.5 L76.5,324.5 L75.5,325.5 L72.5,329.5 L77.5,329.5 M81.5,323.5 L81.5,322.5 L83.5,321.5 L83.5,329.5 M92.5,322.5 L92.5,322.5 L91.5,321.5 L90.5,321.5 L89.5,322.5 L88.5,323.5 L88.5,325.5 L88.5,326.5 L88.5,328.5 L89.5,329.5 L90.5,329.5 L90.5,329.5 L91.5,329.5 L92.5,328.5 L93.5,327.5 L93.5,326.5 L92.5,325.5 L91.5,325.5 L90.5,324.5 L90.5,324.5 L89.5,325.5 L88.5,325.5 L88.5,326.5 M97.5,321.5 L96.5,322.5 L95.5,322.5 L95.5,323.5 L96.5,324.5 L97.5,324.5 L98.5,325.5 L99.5,325.5 L100.5,326.5 L100.5,326.5 L100.5,328.5 L100.5,328.5 L100.5,329.5 L98.5,329.5 L97.5,329.5 L96.5,329.5 L95.5,328.5 L95.5,328.5 L95.5,326.5 L95.5,326.5 L96.5,325.5 L97.5,325.5 L99.5,324.5 L100.5,324.5 L100.5,323.5 L100.5,322.5 L100.5,322.5 L98.5,321.5 L97.5,321.5" stroke="#fff"/>
<path d="M51.5,331.5 L51.5,332.5 L50.5,332.5 L49.5,333.5 L49.5,334.5 L49.5,336.5 L49.5,337.5 L50.5,338.5 L51.5,339.5 L51.5,339.5 L53.5,339.5 L54.5,339.5 L54.5,338.5 L55.5,337.5 L55.5,336.5 L55.5,334.5 L55.5,333.5 L54.5,332.5 L54.5,332.5 L53.5,331.5 L51.5,331.5 M63.5,332.5 L62.5,332.5 L61.5,331.5 L59.5,331.5 L58.5,332.5 L58.5,332.5 L58.5,333.5 L58.5,334.5 L58.5,334.5 L59.5,335.5 L61.5,335.5 L62.5,336.5 L63.5,336.5 L63.5,337.5 L63.5,338.5 L62.5,339.5 L61.5,339.5 L59.5,339.5 L58.5,339.5 L58.5,338.5 M64.5,339.5 L70.5,339.5 M72.5,333.5 L72.5,333.5 L72.5,332.5 L73.5,332.5 L74.5,331.5 L75.5,331.5 L76.5,332.5 L76.5,332.5 L77.5,333.5 L77.5,333.5 L76.5,334.5 L75.5,335.5 L72.5,339.5 L77.5,339.5 M81.5,333.5 L81.5,332.5 L83.5,331.5 L83.5,339.5 M92.5,332.5 L92.5,332.5 L91.5,331.5 L90.5,331.5 L89.5,332.5 L88.5,333.5 L88.5,335.5 L88.5,336.5 L88.5,338.5 L89.5,339.5 L90.5,339.5 L90.5,339.5 L91.5,339.5 L92.5,338.5 L93.5,337.5 L93.5,336.5 L92.5,335.5 L91.5,335.5 L90.5,334.5 L90.5,334.5 L89.5,335.5 L88.5,335.5 L88.5,336.5 M100.5,331.5 L97.5,339.5 M95.5,331.5 L100.5,331.5" stroke="#fff"/>
<path d="M51.5,341.5 L51.5,342.5 L50.5,342.5 L49.5,343.5 L49.5,344.5 L49.5,346.5 L49.5,347.5 L50.5,348.5 L51.5,349.5 L51.5,349.5 L53.5,349.5 L54.5,349.5 L54.5,348.5 L55.5,347.5 L55.5,346.5 L55.5,344.5 L55.5,343.5 L54.5,342.5 L54.5,342.5 L53.5,341.5 L51.5,341.5 M63.5,342.5 L62.5,342.5 L61.5,341.5 L59.5,341.5 L58.5,342.5 L58.5,342.5 L58.5,343.5 L58.5,344.5 L58.5,344.5 L59.5,345.5 L61.5,345.5 L62.5,346.5 L63.5,346.5 L63.5,347.5 L63.5,348.5 L62.5,349.5 L61.5,349.5 L59.5,349.5 L58.5,349.5 L58.5,348.5 M64.5,349.5 L70.5,349.5 M72.5,343.5 L72.5,343.5 L72.5,342.5 L73.5,342.5 L74.5,341.5 L75.5,341.5 L76.5,342.5 L76.5,342.5 L77.5,343.5 L77.5,343.5 L76.5,344.5 L75.5,345.5 L72.5,349.5 L77.5,349.5 M81.5,343.5 L81.5,342.5 L83.5,341.5 L83.5,349.5 M92.5,342.5 L92.5,342.5 L91.5,341.5 L90.5,341.5 L89.5,342.5 L88.5,343.5 L88.5,345.5 L88.5,346.5 L88.5,348.5 L89.5,349.5 L90.5,349.5 L90.5,349.5 L91.5,349.5 L92.5,348.5 L93.5,347.5 L93.5,346.5 L92.5,345.5 L91.5,345.5 L90.5,344.5 L90.5,344.5 L89.5,345.5 L88.5,345.5 L88.5,346.5 M100.5,342.5 L100.5,342.5 L98.5,341.5 L98.5,341.5 L97.5,342.5 L96.5,343.5 L95.5,345.5 L95.5,346.5 L96.5,348.5 L97.5,349.5 L98.5,349.5 L98.5,349.5 L99.5,349.5 L100.5,348.5 L100.5,347.5 L100.5,346.5 L100.5,345.5 L99.5,345.5 L98.5,344.5 L98.5,344.5 L97.5,345.5 L96.5,345.5 L95.5,346.5" stroke="#fff"/>
<path d="M51.5,352.5 L51.5,353.5 L50.5,353.5 L49.5,354.5 L49.5,355.5 L49.5,357.5 L49.5,358.5 L50.5,359.5 L51.5,360.5 L51.5,360.5 L53.5,360.5 L54.5,360.5 L54.5,359.5 L55.5,358.5 L55.5,357.5 L55.5,355.5 L55.5,354.5 L54.5,353.5 L54.5,353.5 L53.5,352.5 L51.5,352.5 M63.5,353.5 L62.5,353.5 L61.5,352.5 L59.5,352.5 L58.5,353.5 L58.5,353.5 L58.5,354.5 L58.5,355.5 L58.5,355.5 L59.5,356.5 L61.5,356.5 L62.5,357.5 L63.5,357.5 L63.5,358.5 L63.5,359.5 L62.5,360.5 L61.5,360.5 L59.5,360.5 L58.5,360.5 L58.5,359.5 M64.5,360.5 L70.5,360.5 M72.5,354.5 L72.5,354.5 L72.5,353.5 L73.5,353.5 L74.5,352.5 L75.5,352.5 L76.5,353.5 L76.5,353.5 L77.5,354.5 L77.5,354.5 L76.5,355.5 L75.5,356.5 L72.5,360.5 L77.5,360.5 M81.5,354.5 L81.5,353.5 L83.5,352.5 L83.5,360.5 M92.5,353.5 L92.5,353.5 L91.5,352.5 L90.5,352.5 L89.5,353.5 L88.5,354.5 L88.5,356.5 L88.5,357.5 L88.5,359.5 L89.5,360.5 L90.5,360.5 L90.5,360.5 L91.5,360.5 L92.5,359.5 L93.5,358.5 L93.5,357.5 L92.5,356.5 L91.5,356.5 L90.5,355.5 L90.5,355.5 L89.5,356.5 L88.5,356.5 L88.5,357.5 M100.5,352.5 L96.5,352.5 L95.5,356.5 L96.5,355.5 L97.5,355.5 L98.5,355.5 L99.5,355.5 L100.5,356.5 L100.5,357.5 L100.5,358.5 L100.5,359.5 L99.5,360.5 L98.5,360.5 L97.5,360.5 L96.5,360.5 L95.5,359.5 L95.5,359.5" stroke="#fff"/>
<path d="M51.5,362.5 L51.5,363.5 L50.5,363.5 L49.5,364.5 L49.5,365.5 L49.5,367.5 L49.5,368.5 L50.5,369.5 L51.5,370.5 L51.5,370.5 L53.5,370.5 L54.5,370.5 L54.5,369.5 L55.5,368.5 L55.5,367.5 L55.5,365.5 L55.5,364.5 L54.5,363.5 L54.5,363.5 L53.5,362.5 L51.5,362.5 M63.5,363.5 L62.5,363.5 L61.5,362.5 L59.5,362.5 L58.5,363.5 L58.5,363.5 L58.5,364.5 L58.5,365.5 L58.5,365.5 L59.5,366.5 L61.5,366.5 L62.5,367.5 L63.5,367.5 L63.5,368.5 L63.5,369.5 L62.5,370.5 L61.5,370.5 L59.5,370.5 L58.5,370.5 L58.5,369.5 M64.5,370.5 L70.5,370.5 M72.5,364.5 L72.5,364.5 L72.5,363.5 L73.5,363.5 L74.5,362.5 L75.5,362.5 L76.5,363.5 L76.5,363.5 L77.5,364.5 L77.5,364.5 L76.5,365.5 L75.5,366.5 L72.5,370.5 L77.5,370.5 M81.5,364.5 L81.5,363.5 L83.5,362.5 L83.5,370.5 M92.5,363.5 L92.5,363.5 L91.5,362.5 L90.5,362.5 L89.5,363.5 L88.5,364.5 L88.5,366.5 L88.5,367.5 L88.5,369.5 L89.5,370.5 L90.5,370.5 L90.5,370.5 L91.5,370.5 L92.5,369.5 L93.5,368.5 L93.5,367.5 L92.5,366.5 L91.5,366.5 L90.5,365.5 L90.5,365.5 L89.5,366.5 L88.5,366.5 L88.5,367.5 M99.5,362.5 L95.5,367.5 L101.5,367.5 M99.5,362.5 L99.5,370.5" stroke="#fff"/>
<path d="M51.5,373.5 L51.5,374.5 L50.5,374.5 L49.5,375.5 L49.5,376.5 L49.5,378.5 L49.5,379.5 L50.5,380.5 L51.5,381.5 L51.5,381.5 L53.5,381.5 L54.5,381.5 L54.5,380.5 L55.5,379.5 L55.5,378.5 L55.5,376.5 L55.5,375.5 L54.5,374.5 L54.5,374.5 L53.5,373.5 L51.5,373.5 M63.5,374.5 L62.5,374.5 L61.5,373.5 L59.5,373.5 L58.5,374.5 L58.5,374.5 L58.5,375.5 L58.5,376.5 L58.5,376.5 L59.5,377.5 L61.5,377.5 L62.5,378.5 L63.5,378.5 L63.5,379.5 L63.5,380.5 L62.5,381.5 L61.5,381.5 L59.5,381.5 L58.5,381.5 L58.5,380.5 M64.5,381.5 L70.5,381.5 M73.5,375.5 L74.5,374.5 L75.5,373.5 L75.5,381.5 M85.5,373.5 L81.5,381.5 M79.5,373.5 L85.5,373.5 M90.5,373.5 L88.5,374.5 L88.5,375.5 L87.5,377.5 L87.5,378.5 L88.5,380.5 L88.5,381.5 L90.5,381.5 L90.5,381.5 L91.5,381.5 L92.5,380.5 L93.5,378.5 L93.5,377.5 L92.5,375.5 L91.5,374.5 L90.5,373.5 L90.5,373.5 M100.5,376.5 L100.5,377.5 L99.5,378.5 L98.5,378.5 L97.5,378.5 L96.5,378.5 L95.5,377.5 L95.5,376.5 L95.5,375.5 L95.5,374.5 L96.5,374.5 L97.5,373.5 L98.5,373.5 L99.5,374.5 L100.5,374.5 L100.5,376.5 L100.5,378.5 L100.5,380.5 L99.5,381.5 L98.5,381.5 L97.5,381.5 L96.5,381.5 L95.5,380.5" stroke="#fff"/>
<path d="M51.5,383.5 L51.5,384.5 L50.5,384.5 L49.5,385.5 L49.5,386.5 L49.5,388.5 L49.5,389.5 L50.5,390.5 L51.5,391.5 L51.5,391.5 L53.5,391.5 L54.5,391.5 L54.5,390.5 L55.5,389.5 L55.5,388.5 L55.5,386.5 L55.5,385.5 L54.5,384.5 L54.5,384.5 L53.5,383.5 L51.5,383.5 M63.5,384.5 L62.5,384.5 L61.5,383.5 L59.5,383.5 L58.5,384.5 L58.5,384.5 L58.5,385.5 L58.5,386.5 L58.5,386.5 L59.5,387.5 L61.5,387.5 L62.5,388.5 L63.5,388.5 L63.5,389.5 L63.5,390.5 L62.5,391.5 L61.5,391.5 L59.5,391.5 L58.5,391.5 L58.5,390.5 M64.5,391.5 L70.5,391.5 M73.5,385.5 L74.5,384.5 L75.5,383.5 L75.5,391.5 M84.5,384.5 L84.5,384.5 L83.5,383.5 L82.5,383.5 L81.5,384.5 L80.5,385.5 L80.5,387.5 L80.5,388.5 L80.5,390.5 L81.5,391.5 L82.5,391.5 L83.5,391.5 L84.5,391.5 L84.5,390.5 L85.5,389.5 L85.5,388.5 L84.5,387.5 L84.5,387.5 L83.5,386.5 L82.5,386.5 L81.5,387.5 L80.5,387.5 L80.5,388.5 M92.5,386.5 L92.5,387.5 L91.5,388.5 L90.5,388.5 L90.5,388.5 L88.5,388.5 L88.5,387.5 L87.5,386.5 L87.5,385.5 L88.5,384.5 L88.5,384.5 L90.5,383.5 L90.5,383.5 L91.5,384.5 L92.5,384.5 L92.5,386.5 L92.5,388.5 L92.5,390.5 L91.5,391.5 L90.5,391.5 L89.5,391.5 L88.5,391.5 L88.5,390.5 M97.5,383.5 L96.5,384.5 L95.5,385.5 L95.5,387.5 L95.5,388.5 L95.5,390.5 L96.5,391.5 L97.5,391.5 L98.5,391.5 L99.5,391.5 L100.5,390.5 L100.5,388.5 L100.5,387.5 L100.5,385.5 L99.5,384.5 L98.5,383.5 L97.5,383.5" stroke="#fff"/>
<path d="M51.5,393.5 L51.5,394.5 L50.5,394.5 L49.5,395.5 L49.5,396.5 L49.5,398.5 L49.5,399.5 L50.5,400.5 L51.5,401.5 L51.5,401.5 L53.5,401.5 L54.5,401.5 L54.5,400.5 L55.5,399.5 L55.5,398.5 L55.5,396.5 L55.5,395.5 L54.5,394.5 L54.5,394.5 L53.5,393.5 L51.5,393.5 M63.5,394.5 L62.5,394.5 L61.5,393.5 L59.5,393.5 L58.5,394.5 L58.5,394.5 L58.5,395.5 L58.5,396.5 L58.5,396.5 L59.5,397.5 L61.5,397.5 L62.5,398.5 L63.5,398.5 L63.5,399.5 L63.5,400.5 L62.5,401.5 L61.5,401.5 L59.5,401.5 L58.5,401.5 L58.5,400.5 M64.5,401.5 L70.5,401.5 M73.5,395.5 L74.5,394.5 L75.5,393.5 L75.5,401.5 M84.5,394.5 L84.5,394.5 L83.5,393.5 L82.5,393.5 L81.5,394.5 L80.5,395.5 L80.5,397.5 L80.5,398.5 L80.5,400.5 L81.5,401.5 L82.5,401.5 L83.5,401.5 L84.5,401.5 L84.5,400.5 L85.5,399.5 L85.5,398.5 L84.5,397.5 L84.5,397.5 L83.5,396.5 L82.5,396.5 L81.5,397.5 L80.5,397.5 L80.5,398.5 M92.5,396.5 L92.5,397.5 L91.5,398.5 L90.5,398.5 L90.5,398.5 L88.5,398.5 L88.5,397.5 L87.5,396.5 L87.5,395.5 L88.5,394.5 L88.5,394.5 L90.5,393.5 L90.5,393.5 L91.5,394.5 L92.5,394.5 L92.5,396.5 L92.5,398.5 L92.5,400.5 L91.5,401.5 L90.5,401.5 L89.5,401.5 L88.5,401.5 L88.5,400.5 M95.5,395.5 L95.5,395.5 L96.5,394.5 L96.5,394.5 L97.5,393.5 L98.5,393.5 L99.5,394.5 L100.5,394.5 L100.5,395.5 L100.5,395.5 L100.5,396.5 L99.5,397.5 L95.5,401.5 L100.5,401.5" stroke="#fff"/>
<path d="M51.5,404.5 L51.5,405.5 L50.5,405.5 L49.5,406.5 L49.5,407.5 L49.5,409.5 L49.5,410.5 L50.5,411.5 L51.5,412.5 L51.5,412.5 L53.5,412.5 L54.5,412.5 L54.5,411.5 L55.5,410.5 L55.5,409.5 L55.5,407.5 L55.5,406.5 L54.5,405.5 L54.5,405.5 L53.5,404.5 L51.5,404.5 M63.5,405.5 L62.5,405.5 L61.5,404.5 L59.5,404.5 L58.5,405.5 L58.5,405.5 L58.5,406.5 L58.5,407.5 L58.5,407.5 L59.5,408.5 L61.5,408.5 L62.5,409.5 L63.5,409.5 L63.5,410.5 L63.5,411.5 L62.5,412.5 L61.5,412.5 L59.5,412.5 L58.5,412.5 L58.5,411.5 M64.5,412.5 L70.5,412.5 M73.5,406.5 L74.5,405.5 L75.5,404.5 L75.5,412.5 M84.5,405.5 L84.5,405.5 L83.5,404.5 L82.5,404.5 L81.5,405.5 L80.5,406.5 L80.5,408.5 L80.5,409.5 L80.5,411.5 L81.5,412.5 L82.5,412.5 L83.5,412.5 L84.5,412.5 L84.5,411.5 L85.5,410.5 L85.5,409.5 L84.5,408.5 L84.5,408.5 L83.5,407.5 L82.5,407.5 L81.5,408.5 L80.5,408.5 L80.5,409.5 M92.5,407.5 L92.5,408.5 L91.5,409.5 L90.5,409.5 L90.5,409.5 L88.5,409.5 L88.5,408.5 L87.5,407.5 L87.5,406.5 L88.5,405.5 L88.5,405.5 L90.5,404.5 L90.5,404.5 L91.5,405.5 L92.5,405.5 L92.5,407.5 L92.5,409.5 L92.5,411.5 L91.5,412.5 L90.5,412.5 L89.5,412.5 L88.5,412.5 L88.5,411.5 M99.5,404.5 L95.5,409.5 L101.5,409.5 M99.5,404.5 L99.5,412.5" stroke="#fff"/>
<path d="M8.5,444.5 L8.5,452.5 M8.5,452.5 L13.5,452.5 M16.5,444.5 L13.5,452.5 M16.5,444.5 L19.5,452.5 M15.5,449.5 L18.5,449.5 M26.5,445.5 L26.5,445.5 L24.5,444.5 L23.5,444.5 L22.5,445.5 L21.5,445.5 L21.5,446.5 L21.5,447.5 L22.5,447.5 L23.5,448.5 L25.5,448.5 L26.5,449.5 L26.5,449.5 L26.5,450.5 L26.5,451.5 L26.5,452.5 L24.5,452.5 L23.5,452.5 L22.5,452.5 L21.5,451.5 M34.5,446.5 L34.5,445.5 L33.5,445.5 L32.5,444.5 L31.5,444.5 L30.5,445.5 L29.5,445.5 L29.5,446.5 L29.5,447.5 L29.5,449.5 L29.5,450.5 L29.5,451.5 L30.5,452.5 L31.5,452.5 L32.5,452.5 L33.5,452.5 L34.5,451.5 L34.5,450.5 M39.5,444.5 L38.5,445.5 L37.5,445.5 L37.5,446.5 L37.5,447.5 L37.5,449.5 L37.5,450.5 L37.5,451.5 L38.5,452.5 L39.5,452.5 L40.5,452.5 L41.5,452.5 L42.5,451.5 L42.5,450.5 L43.5,449.5 L43.5,447.5 L42.5,446.5 L42.5,445.5 L41.5,445.5 L40.5,444.5 L39.5,444.5 M45.5,449.5 L52.5,449.5 M55.5,444.5 L55.5,452.5 M55.5,448.5 L56.5,447.5 L57.5,447.5 L58.5,447.5 L59.5,447.5 L60.5,448.5 L60.5,449.5 L60.5,450.5 L60.5,451.5 L59.5,452.5 L58.5,452.5 L57.5,452.5 L56.5,452.5 L55.5,451.5 M63.5,447.5 L63.5,451.5 L63.5,452.5 L64.5,452.5 L65.5,452.5 L66.5,452.5 L67.5,451.5 M67.5,447.5 L67.5,452.5 M72.5,444.5 L71.5,444.5 L71.5,445.5 L70.5,446.5 L70.5,452.5 M69.5,447.5 L72.5,447.5 M77.5,444.5 L76.5,444.5 L75.5,445.5 L75.5,446.5 L75.5,452.5 M74.5,447.5 L76.5,447.5 M79.5,449.5 L83.5,449.5 L83.5,448.5 L83.5,448.5 L83.5,447.5 L82.5,447.5 L81.5,447.5 L80.5,447.5 L79.5,448.5 L79.5,449.5 L79.5,450.5 L79.5,451.5 L80.5,452.5 L81.5,452.5 L82.5,452.5 L83.5,452.5 L83.5,451.5 M86.5,447.5 L86.5,452.5 M86.5,449.5 L86.5,448.5 L87.5,447.5 L88.5,447.5 L89.5,447.5" stroke="#fff"/>
<path d="M87.5,425.5 L88.5,424.5 L89.5,423.5 L89.5,431.5 M95.5,423.5 L94.5,424.5 L94.5,425.5 L93.5,427.5 L93.5,428.5 L94.5,430.5 L94.5,431.5 L95.5,431.5 L96.5,431.5 L97.5,431.5 L98.5,430.5 L98.5,428.5 L98.5,427.5 L98.5,425.5 L97.5,424.5 L96.5,423.5 L95.5,423.5 M103.5,423.5 L102.5,424.5 L101.5,425.5 L101.5,427.5 L101.5,428.5 L101.5,430.5 L102.5,431.5 L103.5,431.5 L104.5,431.5 L105.5,431.5 L106.5,430.5 L106.5,428.5 L106.5,427.5 L106.5,425.5 L105.5,424.5 L104.5,423.5 L103.5,423.5" stroke="#fff"/>
<path d="M95.5,435.5 L94.5,436.5 L94.5,436.5 L94.5,437.5 L94.5,438.5 L95.5,438.5 L96.5,439.5 L97.5,439.5 L98.5,440.5 L98.5,440.5 L98.5,442.5 L98.5,442.5 L98.5,443.5 L97.5,443.5 L95.5,443.5 L94.5,443.5 L94.5,442.5 L93.5,442.5 L93.5,440.5 L94.5,440.5 L94.5,439.5 L95.5,439.5 L97.5,438.5 L98.5,438.5 L98.5,437.5 L98.5,436.5 L98.5,436.5 L97.5,435.5 L95.5,435.5 M103.5,435.5 L102.5,436.5 L101.5,437.5 L101.5,439.5 L101.5,440.5 L101.5,442.5 L102.5,443.5 L103.5,443.5 L104.5,443.5 L105.5,443.5 L106.5,442.5 L106.5,440.5 L106.5,439.5 L106.5,437.5 L105.5,436.5 L104.5,435.5 L103.5,435.5" stroke="#fff"/>
<path d="M94.5,470.5 L94.5,470.5 L94.5,469.5 L94.5,469.5 L95.5,468.5 L97.5,468.5 L97.5,469.5 L98.5,469.5 L98.5,470.5 L98.5,470.5 L98.5,471.5 L97.5,472.5 L93.5,476.5 L98.5,476.5 M103.5,468.5 L102.5,469.5 L101.5,470.5 L101.5,472.5 L101.5,473.5 L101.5,475.5 L102.5,476.5 L103.5,476.5 L104.5,476.5 L105.5,476.5 L106.5,475.5 L106.5,473.5 L106.5,472.5 L106.5,470.5 L105.5,469.5 L104.5,468.5 L103.5,468.5" stroke="#fff"/>
<path d="M103.5,480.5 L102.5,480.5 L101.5,481.5 L101.5,483.5 L101.5,484.5 L101.5,486.5 L102.5,487.5 L103.5,487.5 L104.5,487.5 L105.5,487.5 L106.5,486.5 L106.5,484.5 L106.5,483.5 L106.5,481.5 L105.5,480.5 L104.5,480.5 L103.5,480.5" stroke="#fff"/>
<path d="M19.5,514.5 L18.5,514.5 L18.5,513.5 L17.5,513.5 L16.5,513.5 L15.5,513.5 L15.5,514.5 L14.5,514.5 L14.5,515.5 L14.5,517.5 L14.5,518.5 L15.5,518.5 L15.5,519.5 L16.5,519.5 L17.5,519.5 L18.5,519.5 L18.5,518.5 L19.5,518.5 M21.5,514.5 L22.5,514.5 L23.5,513.5 L23.5,519.5" stroke="#ff0000"/>
<path d="M40.5,514.5 L39.5,514.5 L39.5,513.5 L38.5,513.5 L37.5,513.5 L36.5,513.5 L36.5,514.5 L35.5,514.5 L35.5,515.5 L35.5,517.5 L35.5,518.5 L36.5,518.5 L36.5,519.5 L37.5,519.5 L38.5,519.5 L39.5,519.5 L39.5,518.5 L40.5,518.5 M42.5,514.5 L42.5,514.5 L42.5,513.5 L42.5,513.5 L43.5,513.5 L44.5,513.5 L45.5,513.5 L45.5,513.5 L45.5,514.5 L45.5,515.5 L45.5,515.5 L45.5,516.5 L41.5,519.5 L46.5,519.5" stroke="#00ff00"/>
<path d="M61.5,514.5 L60.5,514.5 L60.5,513.5 L59.5,513.5 L58.5,513.5 L57.5,513.5 L57.5,514.5 L56.5,514.5 L56.5,515.5 L56.5,517.5 L56.5,518.5 L57.5,518.5 L57.5,519.5 L58.5,519.5 L59.5,519.5 L60.5,519.5 L60.5,518.5 L61.5,518.5 M63.5,513.5 L66.5,513.5 L65.5,515.5 L66.5,515.5 L66.5,516.5 L66.5,516.5 L67.5,517.5 L67.5,517.5 L66.5,518.5 L66.5,519.5 L65.5,519.5 L64.5,519.5 L63.5,519.5 L63.5,519.5 L62.5,518.5" stroke="#a0e6f0"/>
<path d="M77.5,513.5 L77.5,519.5 M77.5,513.5 L81.5,513.5 M77.5,516.5 L79.5,516.5 M77.5,519.5 L81.5,519.5 M83.5,513.5 L83.5,519.5 M86.5,513.5 L86.5,519.5 M84.5,513.5 L89.5,513.5" stroke="#ffff00"/>
<path d="M417.5,250.5 L416.5,250.5 L416.5,250.5 L415.5,251.5 L415.5,257.5 M415.5,252.5 L417.5,252.5 M419.5,252.5 L419.5,259.5 M419.5,253.5 L419.5,252.5 L420.5,252.5 L421.5,252.5 L421.5,252.5 L422.5,253.5 L422.5,254.5 L422.5,255.5 L422.5,256.5 L421.5,257.5 L421.5,257.5 L420.5,257.5 L419.5,257.5 L419.5,256.5" stroke="#ffff00"/>
<path d="M423.5,250.5 L423.5,250.5 L422.5,250.5 L422.5,251.5 L422.5,257.5 M421.5,252.5 L423.5,252.5 M425.5,252.5 L425.5,259.5 M425.5,253.5 L426.5,252.5 L426.5,252.5 L427.5,252.5 L428.5,252.5 L428.5,253.5 L428.5,254.5 L428.5,255.5 L428.5,256.5 L428.5,257.5 L427.5,257.5 L426.5,257.5 L426.5,257.5 L425.5,256.5" stroke="#ffff00"/>
</g>
</svg>
</body></html>
